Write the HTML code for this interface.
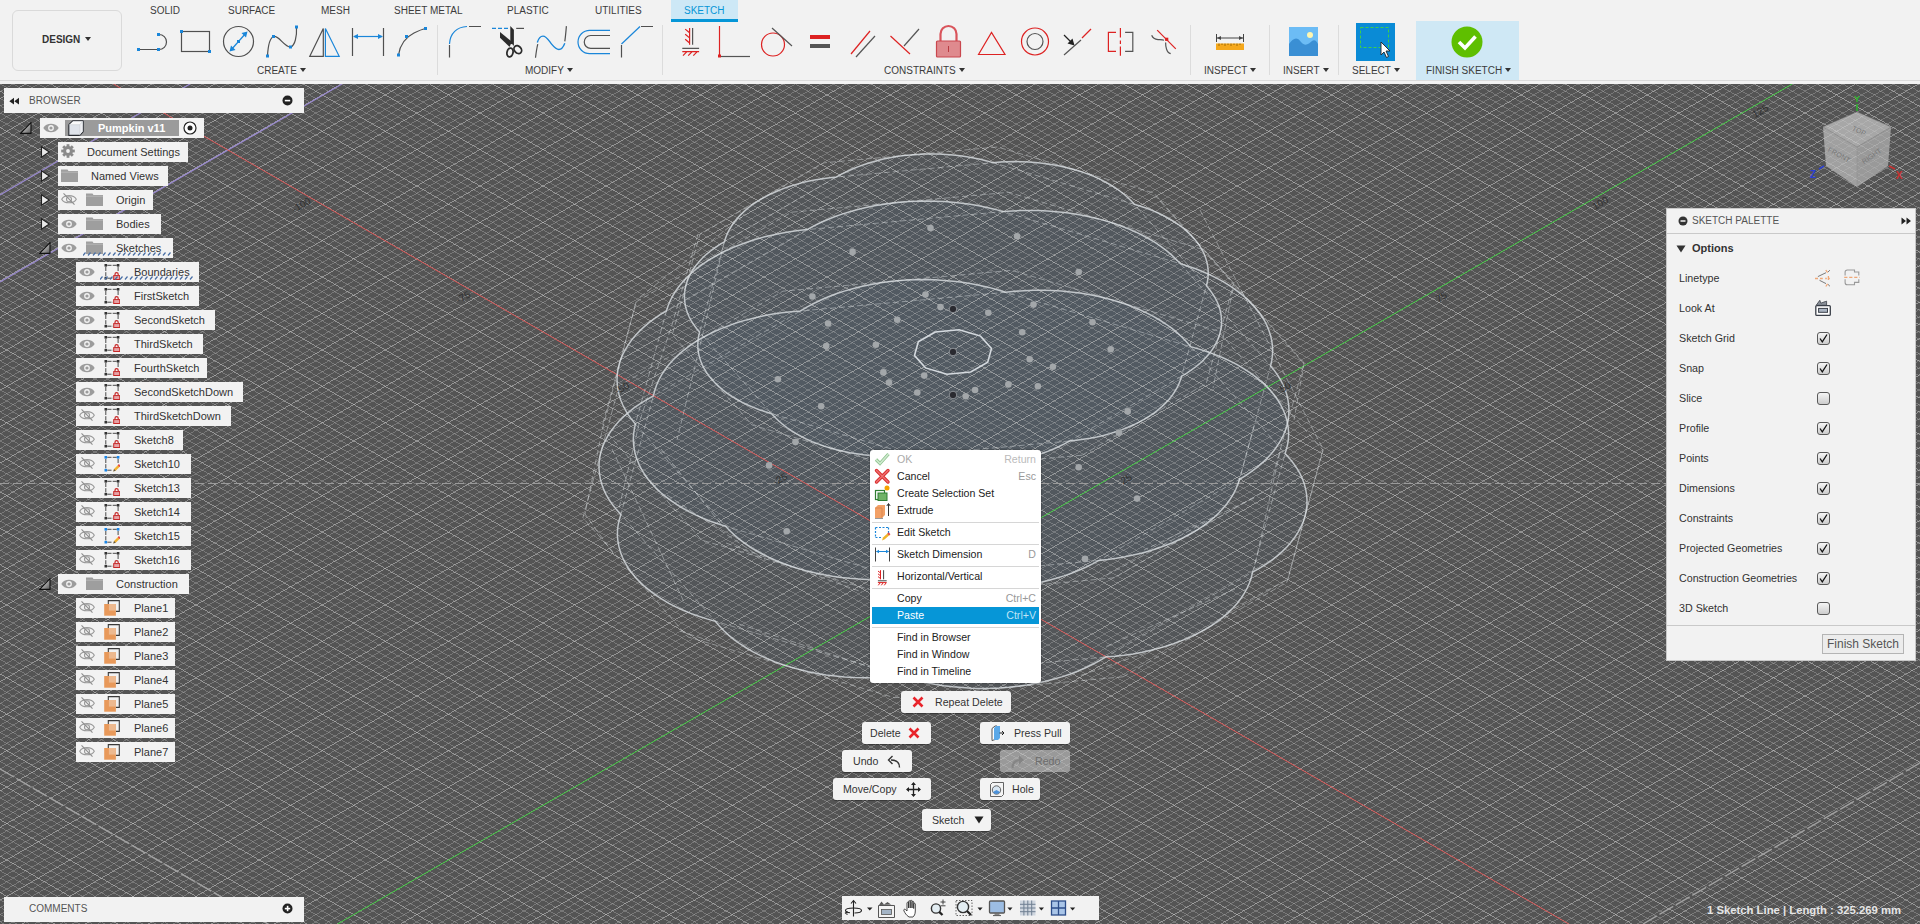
<!DOCTYPE html>
<html><head><meta charset="utf-8">
<style>
*{box-sizing:border-box}
html,body{margin:0;padding:0}
body{width:1920px;height:924px;overflow:hidden;position:relative;background:#545454;font-family:"Liberation Sans",sans-serif;color:#333}
.a{position:absolute}
.t{position:absolute;white-space:nowrap;line-height:1}
#vp{position:absolute;left:0;top:0}
#tb{left:0;top:0;width:1920px;height:84px;background:#f2f2f2}
#tb .tab{font-size:10px;color:#3c3c3c;top:6px}
#tb .grp{font-size:10px;color:#3c3c3c;top:66px}
.dd{display:inline-block;width:0;height:0;border-left:3px solid transparent;border-right:3px solid transparent;border-top:4px solid #333;vertical-align:middle;margin-left:3px;position:relative;top:-1px}
.sep{position:absolute;top:25px;width:1px;height:50px;background:#dcdcdc}
.row{position:absolute;height:20px;background:#f2f2f2}
.row .lbl{position:absolute;top:4px;font-size:11px;color:#333;white-space:nowrap;line-height:1.1}
.pal .lbl{position:absolute;left:12px;font-size:10.7px;color:#333;white-space:nowrap;line-height:1}
.cb{position:absolute;left:150px;width:13px;height:13px;border:1px solid #5a5a5a;border-radius:3px;background:linear-gradient(#f6f6f6,#cccccc)}
.mi{position:absolute;left:0;width:171px;height:17px;font-size:10.6px;color:#222;line-height:17px}
.mi span.l{position:absolute;left:27px}
.mi span.r{position:absolute;right:5px;color:#999}
.msep{position:absolute;left:2px;width:167px;height:1px;background:#d6d6d6}
.btn{position:absolute;height:22px;background:#f3f3f3;border-radius:3px;box-shadow:0 1px 1px rgba(0,0,0,.35);font-size:10.6px;color:#333;line-height:22px;white-space:nowrap}
</style></head><body>
<svg id="vp" width="1920" height="924" viewBox="0 0 1920 924">
<rect x="0" y="84" width="1920" height="840" fill="#545454"/>
<path d="M1252.6 572.1 L1251.3 577.5 L1249.5 582.8 L1247.2 588.0 L1244.4 593.2 L1241.1 598.2 L1237.3 603.2 L1233.0 608.0 L1228.3 612.6 L1223.1 617.1 L1217.4 621.4 L1211.4 625.6 L1205.0 629.5 L1198.2 633.2 L1191.0 636.7 L1183.6 639.9 L1175.8 642.9 L1167.7 645.7 L1159.4 648.1 L1150.8 650.3 L1142.1 652.2 L1133.2 653.9 L1124.1 655.2 L1114.9 656.2 L1105.6 657.0 L1099.2 660.9 L1092.3 664.5 L1085.1 668.0 L1077.6 671.2 L1069.8 674.2 L1061.7 676.9 L1053.3 679.3 L1044.7 681.5 L1036.0 683.3 L1027.0 684.9 L1017.9 686.2 L1008.7 687.2 L999.5 687.9 L990.1 688.3 L980.8 688.4 L971.4 688.2 L962.1 687.6 L952.9 686.8 L943.7 685.7 L934.7 684.3 L925.8 682.6 L917.1 680.6 L908.7 678.3 L900.4 675.7 L891.2 676.7 L881.9 677.3 L872.6 677.7 L863.2 677.7 L853.9 677.5 L844.6 676.9 L835.3 676.0 L826.2 674.9 L817.2 673.4 L808.3 671.7 L799.7 669.6 L791.2 667.3 L783.0 664.7 L775.1 661.9 L767.4 658.8 L760.1 655.4 L753.1 651.8 L746.4 648.0 L740.2 644.0 L734.3 639.8 L728.9 635.4 L723.9 630.8 L719.3 626.1 L715.3 621.3 L706.8 618.9 L698.7 616.3 L690.7 613.4 L683.1 610.3 L675.8 606.9 L668.9 603.3 L662.3 599.4 L656.1 595.4 L650.3 591.2 L644.9 586.7 L640.0 582.1 L635.5 577.4 L631.5 572.5 L627.9 567.5 L624.9 562.4 L622.4 557.2 L620.4 551.9 L618.9 546.6 L617.9 541.2 L617.4 535.8 L617.5 530.4 L618.1 525.0 L619.3 519.7 L620.9 514.4 L616.5 509.6 L612.6 504.7 L609.1 499.7 L606.1 494.6 L603.7 489.4 L601.7 484.1 L600.3 478.7 L599.4 473.4 L599.0 468.0 L599.1 462.6 L599.8 457.2 L601.0 451.8 L602.7 446.5 L605.0 441.3 L607.7 436.1 L611.0 431.0 L614.7 426.1 L618.9 421.3 L623.6 416.6 L628.8 412.1 L634.3 407.7 L640.3 403.6 L646.7 399.6 L653.4 395.9 L654.7 390.5 L656.5 385.2 L658.8 380.0 L661.6 374.8 L664.9 369.8 L668.7 364.8 L673.0 360.0 L677.7 355.4 L682.9 350.9 L688.6 346.6 L694.6 342.4 L701.0 338.5 L707.8 334.8 L715.0 331.3 L722.4 328.1 L730.2 325.1 L738.3 322.3 L746.6 319.9 L755.2 317.7 L763.9 315.8 L772.8 314.1 L781.9 312.8 L791.1 311.8 L800.4 311.0 L806.8 307.1 L813.7 303.5 L820.9 300.0 L828.4 296.8 L836.2 293.8 L844.3 291.1 L852.7 288.7 L861.3 286.5 L870.0 284.7 L879.0 283.1 L888.1 281.8 L897.3 280.8 L906.5 280.1 L915.9 279.7 L925.2 279.6 L934.6 279.8 L943.9 280.4 L953.1 281.2 L962.3 282.3 L971.3 283.7 L980.2 285.4 L988.9 287.4 L997.3 289.7 L1005.6 292.3 L1014.8 291.3 L1024.1 290.7 L1033.4 290.3 L1042.8 290.3 L1052.1 290.5 L1061.4 291.1 L1070.7 292.0 L1079.8 293.1 L1088.8 294.6 L1097.7 296.3 L1106.3 298.4 L1114.8 300.7 L1123.0 303.3 L1130.9 306.1 L1138.6 309.2 L1145.9 312.6 L1152.9 316.2 L1159.6 320.0 L1165.8 324.0 L1171.7 328.2 L1177.1 332.6 L1182.1 337.2 L1186.7 341.9 L1190.7 346.7 L1199.2 349.1 L1207.3 351.7 L1215.3 354.6 L1222.9 357.7 L1230.2 361.1 L1237.1 364.7 L1243.7 368.6 L1249.9 372.6 L1255.7 376.8 L1261.1 381.3 L1266.0 385.9 L1270.5 390.6 L1274.5 395.5 L1278.1 400.5 L1281.1 405.6 L1283.6 410.8 L1285.6 416.1 L1287.1 421.4 L1288.1 426.8 L1288.6 432.2 L1288.5 437.6 L1287.9 443.0 L1286.7 448.3 L1285.1 453.6 L1289.5 458.4 L1293.4 463.3 L1296.9 468.3 L1299.9 473.4 L1302.3 478.6 L1304.3 483.9 L1305.7 489.3 L1306.6 494.6 L1307.0 500.0 L1306.9 505.4 L1306.2 510.8 L1305.0 516.2 L1303.3 521.5 L1301.0 526.7 L1298.3 531.9 L1295.0 537.0 L1291.3 541.9 L1287.1 546.7 L1282.4 551.4 L1277.2 555.9 L1271.7 560.3 L1265.7 564.4 L1259.3 568.4Z" fill="rgba(85,110,135,0.12)" stroke="none"/>
<path d="M1239.5 479.3 L1237.9 484.3 L1235.8 489.3 L1233.3 494.2 L1230.3 499.0 L1226.9 503.7 L1223.1 508.3 L1218.9 512.8 L1214.3 517.2 L1209.3 521.4 L1203.9 525.4 L1198.1 529.3 L1192.0 533.0 L1185.6 536.5 L1178.9 539.8 L1171.9 543.0 L1164.6 545.8 L1157.0 548.5 L1149.3 551.0 L1141.3 553.2 L1133.1 555.1 L1124.8 556.8 L1116.3 558.3 L1107.7 559.5 L1099.0 560.4 L1092.6 563.9 L1085.8 567.2 L1078.8 570.3 L1071.5 573.2 L1064.0 575.9 L1056.2 578.3 L1048.2 580.5 L1040.0 582.5 L1031.7 584.2 L1023.2 585.6 L1014.6 586.8 L1005.9 587.8 L997.1 588.4 L988.3 588.8 L979.4 589.0 L970.6 588.8 L961.8 588.4 L953.0 587.8 L944.3 586.8 L935.7 585.7 L927.2 584.2 L918.9 582.5 L910.7 580.6 L902.7 578.4 L893.9 579.0 L885.1 579.4 L876.3 579.6 L867.4 579.4 L858.6 579.0 L849.8 578.3 L841.1 577.4 L832.5 576.2 L824.0 574.8 L815.7 573.1 L807.5 571.1 L799.5 568.9 L791.8 566.5 L784.2 563.8 L776.9 560.9 L769.9 557.8 L763.2 554.5 L756.7 551.0 L750.6 547.3 L744.9 543.4 L739.5 539.3 L734.5 535.1 L729.9 530.8 L725.6 526.3 L717.9 523.8 L710.3 521.2 L703.0 518.3 L696.0 515.1 L689.3 511.8 L682.9 508.3 L676.8 504.6 L671.0 500.7 L665.7 496.7 L660.6 492.5 L656.0 488.1 L651.8 483.6 L648.0 479.0 L644.6 474.3 L641.6 469.5 L639.1 464.6 L637.1 459.6 L635.4 454.6 L634.3 449.5 L633.6 444.4 L633.3 439.3 L633.6 434.2 L634.3 429.1 L635.4 424.0 L631.6 419.4 L628.2 414.7 L625.3 409.9 L622.8 405.0 L620.7 400.0 L619.1 395.0 L618.0 389.9 L617.3 384.8 L617.0 379.7 L617.3 374.6 L618.0 369.5 L619.1 364.5 L620.7 359.4 L622.8 354.5 L625.3 349.6 L628.3 344.8 L631.6 340.0 L635.4 335.4 L639.7 330.9 L644.3 326.6 L649.3 322.4 L654.7 318.3 L660.4 314.4 L666.5 310.7 L668.1 305.7 L670.2 300.7 L672.7 295.8 L675.7 291.0 L679.1 286.3 L682.9 281.7 L687.1 277.2 L691.7 272.8 L696.7 268.6 L702.1 264.6 L707.9 260.7 L714.0 257.0 L720.4 253.5 L727.1 250.2 L734.1 247.0 L741.4 244.2 L749.0 241.5 L756.7 239.0 L764.7 236.8 L772.9 234.9 L781.2 233.2 L789.7 231.7 L798.3 230.5 L807.0 229.6 L813.4 226.1 L820.2 222.8 L827.2 219.7 L834.5 216.8 L842.0 214.1 L849.8 211.7 L857.8 209.5 L866.0 207.5 L874.3 205.8 L882.8 204.4 L891.4 203.2 L900.1 202.2 L908.9 201.6 L917.7 201.2 L926.6 201.0 L935.4 201.2 L944.2 201.6 L953.0 202.2 L961.7 203.2 L970.3 204.3 L978.8 205.8 L987.1 207.5 L995.3 209.4 L1003.3 211.6 L1012.1 211.0 L1020.9 210.6 L1029.7 210.4 L1038.6 210.6 L1047.4 211.0 L1056.2 211.7 L1064.9 212.6 L1073.5 213.8 L1082.0 215.2 L1090.3 216.9 L1098.5 218.9 L1106.5 221.1 L1114.2 223.5 L1121.8 226.2 L1129.1 229.1 L1136.1 232.2 L1142.8 235.5 L1149.3 239.0 L1155.4 242.7 L1161.1 246.6 L1166.5 250.7 L1171.5 254.9 L1176.1 259.2 L1180.4 263.7 L1188.1 266.2 L1195.7 268.8 L1203.0 271.7 L1210.0 274.9 L1216.7 278.2 L1223.1 281.7 L1229.2 285.4 L1235.0 289.3 L1240.3 293.3 L1245.4 297.5 L1250.0 301.9 L1254.2 306.4 L1258.0 311.0 L1261.4 315.7 L1264.4 320.5 L1266.9 325.4 L1268.9 330.4 L1270.6 335.4 L1271.7 340.5 L1272.4 345.6 L1272.7 350.7 L1272.4 355.8 L1271.7 360.9 L1270.6 366.0 L1274.4 370.6 L1277.8 375.3 L1280.7 380.1 L1283.2 385.0 L1285.3 390.0 L1286.9 395.0 L1288.0 400.1 L1288.7 405.2 L1289.0 410.3 L1288.7 415.4 L1288.0 420.5 L1286.9 425.5 L1285.3 430.6 L1283.2 435.5 L1280.7 440.4 L1277.7 445.2 L1274.4 450.0 L1270.6 454.6 L1266.3 459.1 L1261.7 463.4 L1256.7 467.6 L1251.3 471.7 L1245.6 475.6Z" fill="rgba(85,110,135,0.12)" stroke="none"/>
<path d="M1181.6 376.2 L1180.3 380.3 L1178.8 384.2 L1176.8 388.2 L1174.5 392.0 L1171.9 395.8 L1168.9 399.5 L1165.5 403.1 L1161.8 406.6 L1157.9 410.0 L1153.6 413.3 L1149.0 416.4 L1144.1 419.3 L1139.0 422.1 L1133.6 424.8 L1127.9 427.3 L1122.1 429.6 L1116.0 431.7 L1109.8 433.6 L1103.4 435.4 L1096.8 436.9 L1090.1 438.2 L1083.3 439.3 L1076.4 440.3 L1069.5 441.0 L1064.4 443.8 L1059.0 446.5 L1053.5 449.0 L1047.7 451.4 L1041.7 453.5 L1035.5 455.5 L1029.1 457.3 L1022.6 458.9 L1015.9 460.2 L1009.1 461.4 L1002.2 462.4 L995.3 463.1 L988.3 463.6 L981.2 464.0 L974.1 464.1 L967.0 463.9 L960.0 463.6 L953.0 463.0 L946.0 462.3 L939.2 461.3 L932.4 460.1 L925.7 458.7 L919.2 457.1 L912.9 455.3 L905.9 455.9 L898.8 456.2 L891.7 456.4 L884.7 456.3 L877.6 456.0 L870.6 455.5 L863.6 454.8 L856.7 453.8 L849.9 452.7 L843.2 451.3 L836.7 449.8 L830.3 448.0 L824.1 446.1 L818.1 443.9 L812.2 441.6 L806.6 439.1 L801.3 436.4 L796.2 433.6 L791.3 430.6 L786.8 427.5 L782.5 424.2 L778.6 420.8 L774.9 417.3 L771.6 413.7 L765.4 411.8 L759.3 409.7 L753.4 407.4 L747.8 405.0 L742.3 402.3 L737.2 399.5 L732.3 396.6 L727.6 393.5 L723.3 390.3 L719.3 386.9 L715.6 383.4 L712.2 379.8 L709.2 376.1 L706.5 372.4 L704.1 368.5 L702.1 364.6 L700.5 360.6 L699.3 356.6 L698.4 352.5 L697.9 348.5 L697.8 344.4 L698.0 340.3 L698.6 336.2 L699.6 332.2 L696.5 328.5 L693.7 324.7 L691.3 320.9 L689.2 317.0 L687.5 313.0 L686.2 309.0 L685.2 305.0 L684.7 300.9 L684.4 296.8 L684.6 292.7 L685.2 288.6 L686.1 284.6 L687.4 280.6 L689.0 276.6 L691.1 272.7 L693.4 268.8 L696.2 265.1 L699.3 261.4 L702.7 257.8 L706.4 254.3 L710.5 251.0 L714.9 247.8 L719.5 244.7 L724.4 241.8 L725.7 237.7 L727.2 233.8 L729.2 229.8 L731.5 226.0 L734.1 222.2 L737.1 218.5 L740.5 214.9 L744.2 211.4 L748.1 208.0 L752.4 204.7 L757.0 201.6 L761.9 198.7 L767.0 195.9 L772.4 193.2 L778.1 190.7 L783.9 188.4 L790.0 186.3 L796.2 184.4 L802.6 182.6 L809.2 181.1 L815.9 179.8 L822.7 178.7 L829.6 177.7 L836.5 177.0 L841.6 174.2 L847.0 171.5 L852.5 169.0 L858.3 166.6 L864.3 164.5 L870.5 162.5 L876.9 160.7 L883.4 159.1 L890.1 157.8 L896.9 156.6 L903.8 155.6 L910.7 154.9 L917.7 154.4 L924.8 154.0 L931.9 153.9 L939.0 154.1 L946.0 154.4 L953.0 155.0 L960.0 155.7 L966.8 156.7 L973.6 157.9 L980.3 159.3 L986.8 160.9 L993.1 162.7 L1000.1 162.1 L1007.2 161.8 L1014.3 161.6 L1021.3 161.7 L1028.4 162.0 L1035.4 162.5 L1042.4 163.2 L1049.3 164.2 L1056.1 165.3 L1062.8 166.7 L1069.3 168.2 L1075.7 170.0 L1081.9 171.9 L1087.9 174.1 L1093.8 176.4 L1099.4 178.9 L1104.7 181.6 L1109.8 184.4 L1114.7 187.4 L1119.2 190.5 L1123.5 193.8 L1127.4 197.2 L1131.1 200.7 L1134.4 204.3 L1140.6 206.2 L1146.7 208.3 L1152.6 210.6 L1158.2 213.0 L1163.7 215.7 L1168.8 218.5 L1173.7 221.4 L1178.4 224.5 L1182.7 227.7 L1186.7 231.1 L1190.4 234.6 L1193.8 238.2 L1196.8 241.9 L1199.5 245.6 L1201.9 249.5 L1203.9 253.4 L1205.5 257.4 L1206.7 261.4 L1207.6 265.5 L1208.1 269.5 L1208.2 273.6 L1208.0 277.7 L1207.4 281.8 L1206.4 285.8 L1209.5 289.5 L1212.3 293.3 L1214.7 297.1 L1216.8 301.0 L1218.5 305.0 L1219.8 309.0 L1220.8 313.0 L1221.3 317.1 L1221.6 321.2 L1221.4 325.3 L1220.8 329.4 L1219.9 333.4 L1218.6 337.4 L1217.0 341.4 L1214.9 345.3 L1212.6 349.2 L1209.8 352.9 L1206.7 356.6 L1203.3 360.2 L1199.6 363.7 L1195.5 367.0 L1191.1 370.2 L1186.5 373.3Z" fill="rgba(85,110,135,0.12)" stroke="none"/>
<path d="M0 -1023.73 L1920 84.78 M0 -1016.44 L1920 92.07 M0 -1009.16 L1920 99.36 M0 -994.58 L1920 113.93 M0 -987.30 L1920 121.21 M0 -980.01 L1920 128.50 M0 -972.73 L1920 135.79 M0 -958.15 L1920 150.36 M0 -950.87 L1920 157.64 M0 -943.58 L1920 164.93 M0 -936.30 L1920 172.22 M0 -921.72 L1920 186.79 M0 -914.44 L1920 194.07 M0 -907.15 L1920 201.36 M0 -899.87 L1920 208.65 M0 -885.29 L1920 223.22 M0 -878.01 L1920 230.50 M0 -870.72 L1920 237.79 M0 -863.44 L1920 245.08 M0 -848.86 L1920 259.65 M0 -841.58 L1920 266.93 M0 -834.29 L1920 274.22 M0 -827.01 L1920 281.51 M0 -812.43 L1920 296.08 M0 -805.15 L1920 303.36 M0 -797.86 L1920 310.65 M0 -790.58 L1920 317.94 M0 -776.00 L1920 332.51 M0 -768.72 L1920 339.79 M0 -761.43 L1920 347.08 M0 -754.15 L1920 354.37 M0 -739.57 L1920 368.94 M0 -732.29 L1920 376.22 M0 -725.00 L1920 383.51 M0 -717.72 L1920 390.80 M0 -703.14 L1920 405.37 M0 -695.86 L1920 412.65 M0 -688.57 L1920 419.94 M0 -681.29 L1920 427.23 M0 -666.71 L1920 441.80 M0 -659.43 L1920 449.08 M0 -652.14 L1920 456.37 M0 -644.86 L1920 463.66 M0 -630.28 L1920 478.23 M0 -623.00 L1920 485.51 M0 -615.71 L1920 492.80 M0 -608.43 L1920 500.09 M0 -593.85 L1920 514.66 M0 -586.57 L1920 521.94 M0 -579.28 L1920 529.23 M0 -572.00 L1920 536.52 M0 -557.42 L1920 551.09 M0 -550.14 L1920 558.37 M0 -542.85 L1920 565.66 M0 -535.57 L1920 572.95 M0 -520.99 L1920 587.52 M0 -513.71 L1920 594.80 M0 -506.42 L1920 602.09 M0 -499.14 L1920 609.38 M0 -484.56 L1920 623.95 M0 -477.28 L1920 631.23 M0 -469.99 L1920 638.52 M0 -462.71 L1920 645.81 M0 -448.13 L1920 660.38 M0 -440.85 L1920 667.66 M0 -433.56 L1920 674.95 M0 -426.28 L1920 682.24 M0 -411.70 L1920 696.81 M0 -404.42 L1920 704.09 M0 -397.13 L1920 711.38 M0 -389.85 L1920 718.67 M0 -375.27 L1920 733.24 M0 -367.99 L1920 740.52 M0 -360.70 L1920 747.81 M0 -353.42 L1920 755.10 M0 -338.84 L1920 769.67 M0 -331.56 L1920 776.95 M0 -324.27 L1920 784.24 M0 -316.99 L1920 791.53 M0 -302.41 L1920 806.10 M0 -295.13 L1920 813.38 M0 -287.84 L1920 820.67 M0 -280.56 L1920 827.96 M0 -265.98 L1920 842.53 M0 -258.70 L1920 849.81 M0 -251.41 L1920 857.10 M0 -244.13 L1920 864.39 M0 -229.55 L1920 878.96 M0 -222.27 L1920 886.24 M0 -214.98 L1920 893.53 M0 -207.70 L1920 900.82 M0 -193.12 L1920 915.39 M0 -185.84 L1920 922.67 M0 -178.55 L1920 929.96 M0 -171.27 L1920 937.25 M0 -156.69 L1920 951.82 M0 -149.41 L1920 959.10 M0 -142.12 L1920 966.39 M0 -134.84 L1920 973.68 M0 -120.26 L1920 988.25 M0 -112.98 L1920 995.53 M0 -105.69 L1920 1002.82 M0 -98.41 L1920 1010.11 M0 -83.83 L1920 1024.68 M0 -76.55 L1920 1031.96 M0 -69.26 L1920 1039.25 M0 -61.98 L1920 1046.54 M0 -47.40 L1920 1061.11 M0 -40.12 L1920 1068.39 M0 -32.83 L1920 1075.68 M0 -25.55 L1920 1082.97 M0 -10.97 L1920 1097.54 M0 -3.69 L1920 1104.82 M0 3.60 L1920 1112.11 M0 10.88 L1920 1119.40 M0 25.46 L1920 1133.97 M0 32.74 L1920 1141.25 M0 40.03 L1920 1148.54 M0 47.31 L1920 1155.83 M0 61.89 L1920 1170.40 M0 69.17 L1920 1177.68 M0 76.46 L1920 1184.97 M0 83.74 L1920 1192.26 M0 98.32 L1920 1206.83 M0 105.60 L1920 1214.11 M0 112.89 L1920 1221.40 M0 120.17 L1920 1228.69 M0 134.75 L1920 1243.26 M0 142.03 L1920 1250.54 M0 149.32 L1920 1257.83 M0 156.60 L1920 1265.12 M0 171.18 L1920 1279.69 M0 178.46 L1920 1286.97 M0 185.75 L1920 1294.26 M0 193.03 L1920 1301.55 M0 207.61 L1920 1316.12 M0 214.89 L1920 1323.40 M0 222.18 L1920 1330.69 M0 229.46 L1920 1337.98 M0 244.04 L1920 1352.55 M0 251.32 L1920 1359.83 M0 258.61 L1920 1367.12 M0 265.89 L1920 1374.41 M0 280.47 L1920 1388.98 M0 287.75 L1920 1396.26 M0 295.04 L1920 1403.55 M0 302.32 L1920 1410.84 M0 316.90 L1920 1425.41 M0 324.18 L1920 1432.69 M0 331.47 L1920 1439.98 M0 338.75 L1920 1447.27 M0 353.33 L1920 1461.84 M0 360.61 L1920 1469.12 M0 367.90 L1920 1476.41 M0 375.18 L1920 1483.70 M0 389.76 L1920 1498.27 M0 397.04 L1920 1505.55 M0 404.33 L1920 1512.84 M0 411.61 L1920 1520.13 M0 426.19 L1920 1534.70 M0 433.47 L1920 1541.98 M0 440.76 L1920 1549.27 M0 448.04 L1920 1556.56 M0 462.62 L1920 1571.13 M0 469.90 L1920 1578.41 M0 477.19 L1920 1585.70 M0 484.47 L1920 1592.99 M0 499.05 L1920 1607.56 M0 506.33 L1920 1614.84 M0 513.62 L1920 1622.13 M0 520.90 L1920 1629.42 M0 535.48 L1920 1643.99 M0 542.76 L1920 1651.27 M0 550.05 L1920 1658.56 M0 557.33 L1920 1665.85 M0 571.91 L1920 1680.42 M0 579.19 L1920 1687.70 M0 586.48 L1920 1694.99 M0 593.76 L1920 1702.28 M0 608.34 L1920 1716.85 M0 615.62 L1920 1724.13 M0 622.91 L1920 1731.42 M0 630.19 L1920 1738.71 M0 644.77 L1920 1753.28 M0 652.05 L1920 1760.56 M0 659.34 L1920 1767.85 M0 666.62 L1920 1775.14 M0 681.20 L1920 1789.71 M0 688.48 L1920 1796.99 M0 695.77 L1920 1804.28 M0 703.05 L1920 1811.57 M0 717.63 L1920 1826.14 M0 724.91 L1920 1833.42 M0 732.20 L1920 1840.71 M0 739.48 L1920 1848.00 M0 754.06 L1920 1862.57 M0 761.34 L1920 1869.85 M0 768.63 L1920 1877.14 M0 775.91 L1920 1884.43 M0 790.49 L1920 1899.00 M0 797.77 L1920 1906.28 M0 805.06 L1920 1913.57 M0 812.34 L1920 1920.86 M0 826.92 L1920 1935.43 M0 834.20 L1920 1942.71 M0 841.49 L1920 1950.00 M0 848.77 L1920 1957.29 M0 863.35 L1920 1971.86 M0 870.63 L1920 1979.14 M0 877.92 L1920 1986.43 M0 885.20 L1920 1993.72 M0 899.78 L1920 2008.29 M0 907.06 L1920 2015.57 M0 914.35 L1920 2022.86 M0 921.63 L1920 2030.15 M0 84.22 L1920 -1024.29 M0 91.50 L1920 -1017.01 M0 106.08 L1920 -1002.44 M0 113.36 L1920 -995.15 M0 120.65 L1920 -987.86 M0 127.93 L1920 -980.58 M0 142.51 L1920 -966.01 M0 149.79 L1920 -958.72 M0 157.08 L1920 -951.43 M0 164.36 L1920 -944.15 M0 178.94 L1920 -929.58 M0 186.22 L1920 -922.29 M0 193.51 L1920 -915.00 M0 200.79 L1920 -907.72 M0 215.37 L1920 -893.15 M0 222.65 L1920 -885.86 M0 229.94 L1920 -878.57 M0 237.22 L1920 -871.29 M0 251.80 L1920 -856.72 M0 259.08 L1920 -849.43 M0 266.37 L1920 -842.14 M0 273.65 L1920 -834.86 M0 288.23 L1920 -820.29 M0 295.51 L1920 -813.00 M0 302.80 L1920 -805.71 M0 310.08 L1920 -798.43 M0 324.66 L1920 -783.86 M0 331.94 L1920 -776.57 M0 339.23 L1920 -769.28 M0 346.51 L1920 -762.00 M0 361.09 L1920 -747.43 M0 368.37 L1920 -740.14 M0 375.66 L1920 -732.85 M0 382.94 L1920 -725.57 M0 397.52 L1920 -711.00 M0 404.80 L1920 -703.71 M0 412.09 L1920 -696.42 M0 419.37 L1920 -689.14 M0 433.95 L1920 -674.57 M0 441.23 L1920 -667.28 M0 448.52 L1920 -659.99 M0 455.80 L1920 -652.71 M0 470.38 L1920 -638.14 M0 477.66 L1920 -630.85 M0 484.95 L1920 -623.56 M0 492.23 L1920 -616.28 M0 506.81 L1920 -601.71 M0 514.09 L1920 -594.42 M0 521.38 L1920 -587.13 M0 528.66 L1920 -579.85 M0 543.24 L1920 -565.28 M0 550.52 L1920 -557.99 M0 557.81 L1920 -550.70 M0 565.09 L1920 -543.42 M0 579.67 L1920 -528.85 M0 586.95 L1920 -521.56 M0 594.24 L1920 -514.27 M0 601.52 L1920 -506.99 M0 616.10 L1920 -492.42 M0 623.38 L1920 -485.13 M0 630.67 L1920 -477.84 M0 637.95 L1920 -470.56 M0 652.53 L1920 -455.99 M0 659.81 L1920 -448.70 M0 667.10 L1920 -441.41 M0 674.38 L1920 -434.13 M0 688.96 L1920 -419.56 M0 696.24 L1920 -412.27 M0 703.53 L1920 -404.98 M0 710.81 L1920 -397.70 M0 725.39 L1920 -383.13 M0 732.67 L1920 -375.84 M0 739.96 L1920 -368.55 M0 747.24 L1920 -361.27 M0 761.82 L1920 -346.70 M0 769.10 L1920 -339.41 M0 776.39 L1920 -332.12 M0 783.67 L1920 -324.84 M0 798.25 L1920 -310.27 M0 805.53 L1920 -302.98 M0 812.82 L1920 -295.69 M0 820.10 L1920 -288.41 M0 834.68 L1920 -273.84 M0 841.96 L1920 -266.55 M0 849.25 L1920 -259.26 M0 856.53 L1920 -251.98 M0 871.11 L1920 -237.41 M0 878.39 L1920 -230.12 M0 885.68 L1920 -222.83 M0 892.96 L1920 -215.55 M0 907.54 L1920 -200.98 M0 914.82 L1920 -193.69 M0 922.11 L1920 -186.40 M0 929.39 L1920 -179.12 M0 943.97 L1920 -164.55 M0 951.25 L1920 -157.26 M0 958.54 L1920 -149.97 M0 965.82 L1920 -142.69 M0 980.40 L1920 -128.12 M0 987.68 L1920 -120.83 M0 994.97 L1920 -113.54 M0 1002.25 L1920 -106.26 M0 1016.83 L1920 -91.69 M0 1024.11 L1920 -84.40 M0 1031.40 L1920 -77.11 M0 1038.68 L1920 -69.83 M0 1053.26 L1920 -55.26 M0 1060.54 L1920 -47.97 M0 1067.83 L1920 -40.68 M0 1075.11 L1920 -33.40 M0 1089.69 L1920 -18.83 M0 1096.97 L1920 -11.54 M0 1104.26 L1920 -4.25 M0 1111.54 L1920 3.03 M0 1126.12 L1920 17.60 M0 1133.40 L1920 24.89 M0 1140.69 L1920 32.18 M0 1147.97 L1920 39.46 M0 1162.55 L1920 54.03 M0 1169.83 L1920 61.32 M0 1177.12 L1920 68.61 M0 1184.40 L1920 75.89 M0 1198.98 L1920 90.46 M0 1206.26 L1920 97.75 M0 1213.55 L1920 105.04 M0 1220.83 L1920 112.32 M0 1235.41 L1920 126.89 M0 1242.69 L1920 134.18 M0 1249.98 L1920 141.47 M0 1257.26 L1920 148.75 M0 1271.84 L1920 163.32 M0 1279.12 L1920 170.61 M0 1286.41 L1920 177.90 M0 1293.69 L1920 185.18 M0 1308.27 L1920 199.75 M0 1315.55 L1920 207.04 M0 1322.84 L1920 214.33 M0 1330.12 L1920 221.61 M0 1344.70 L1920 236.18 M0 1351.98 L1920 243.47 M0 1359.27 L1920 250.76 M0 1366.55 L1920 258.04 M0 1381.13 L1920 272.61 M0 1388.41 L1920 279.90 M0 1395.70 L1920 287.19 M0 1402.98 L1920 294.47 M0 1417.56 L1920 309.04 M0 1424.84 L1920 316.33 M0 1432.13 L1920 323.62 M0 1439.41 L1920 330.90 M0 1453.99 L1920 345.47 M0 1461.27 L1920 352.76 M0 1468.56 L1920 360.05 M0 1475.84 L1920 367.33 M0 1490.42 L1920 381.90 M0 1497.70 L1920 389.19 M0 1504.99 L1920 396.48 M0 1512.27 L1920 403.76 M0 1526.85 L1920 418.33 M0 1534.13 L1920 425.62 M0 1541.42 L1920 432.91 M0 1548.70 L1920 440.19 M0 1563.28 L1920 454.76 M0 1570.56 L1920 462.05 M0 1577.85 L1920 469.34 M0 1585.13 L1920 476.62 M0 1599.71 L1920 491.19 M0 1606.99 L1920 498.48 M0 1614.28 L1920 505.77 M0 1621.56 L1920 513.05 M0 1636.14 L1920 527.62 M0 1643.42 L1920 534.91 M0 1650.71 L1920 542.20 M0 1657.99 L1920 549.48 M0 1672.57 L1920 564.05 M0 1679.85 L1920 571.34 M0 1687.14 L1920 578.63 M0 1694.42 L1920 585.91 M0 1709.00 L1920 600.48 M0 1716.28 L1920 607.77 M0 1723.57 L1920 615.06 M0 1730.85 L1920 622.34 M0 1745.43 L1920 636.91 M0 1752.71 L1920 644.20 M0 1760.00 L1920 651.49 M0 1767.28 L1920 658.77 M0 1781.86 L1920 673.34 M0 1789.14 L1920 680.63 M0 1796.43 L1920 687.92 M0 1803.71 L1920 695.20 M0 1818.29 L1920 709.77 M0 1825.57 L1920 717.06 M0 1832.86 L1920 724.35 M0 1840.14 L1920 731.63 M0 1854.72 L1920 746.20 M0 1862.00 L1920 753.49 M0 1869.29 L1920 760.78 M0 1876.57 L1920 768.06 M0 1891.15 L1920 782.63 M0 1898.43 L1920 789.92 M0 1905.72 L1920 797.21 M0 1913.00 L1920 804.49 M0 1927.58 L1920 819.06 M0 1934.86 L1920 826.35 M0 1942.15 L1920 833.64 M0 1949.43 L1920 840.92 M0 1964.01 L1920 855.49 M0 1971.29 L1920 862.78 M0 1978.58 L1920 870.07 M0 1985.86 L1920 877.35 M0 2000.44 L1920 891.92 M0 2007.72 L1920 899.21 M0 2015.01 L1920 906.50 M0 2022.29 L1920 913.78" stroke="#b8b8b8" stroke-opacity="0.41" stroke-width="0.87" fill="none" shape-rendering="crispEdges"/>
<path d="M0 -1001.87 L1920 106.64 M0 -965.44 L1920 143.07 M0 -929.01 L1920 179.50 M0 -892.58 L1920 215.93 M0 -856.15 L1920 252.36 M0 -819.72 L1920 288.79 M0 -783.29 L1920 325.22 M0 -746.86 L1920 361.65 M0 -710.43 L1920 398.08 M0 -674.00 L1920 434.51 M0 -637.57 L1920 470.94 M0 -601.14 L1920 507.37 M0 -564.71 L1920 543.80 M0 -528.28 L1920 580.23 M0 -491.85 L1920 616.66 M0 -455.42 L1920 653.09 M0 -418.99 L1920 689.52 M0 -382.56 L1920 725.95 M0 -346.13 L1920 762.38 M0 -309.70 L1920 798.81 M0 -273.27 L1920 835.24 M0 -236.84 L1920 871.67 M0 -200.41 L1920 908.10 M0 -163.98 L1920 944.53 M0 -127.55 L1920 980.96 M0 -91.12 L1920 1017.39 M0 -54.69 L1920 1053.82 M0 -18.26 L1920 1090.25 M0 18.17 L1920 1126.68 M0 54.60 L1920 1163.11 M0 91.03 L1920 1199.54 M0 127.46 L1920 1235.97 M0 163.89 L1920 1272.40 M0 200.32 L1920 1308.83 M0 236.75 L1920 1345.26 M0 273.18 L1920 1381.69 M0 309.61 L1920 1418.12 M0 346.04 L1920 1454.55 M0 382.47 L1920 1490.98 M0 418.90 L1920 1527.41 M0 455.33 L1920 1563.84 M0 491.76 L1920 1600.27 M0 528.19 L1920 1636.70 M0 564.62 L1920 1673.13 M0 601.05 L1920 1709.56 M0 637.48 L1920 1745.99 M0 673.91 L1920 1782.42 M0 710.34 L1920 1818.85 M0 746.77 L1920 1855.28 M0 783.20 L1920 1891.71 M0 819.63 L1920 1928.14 M0 856.06 L1920 1964.57 M0 892.49 L1920 2001.00 M0 98.79 L1920 -1009.72 M0 135.22 L1920 -973.29 M0 171.65 L1920 -936.86 M0 208.08 L1920 -900.43 M0 244.51 L1920 -864.00 M0 280.94 L1920 -827.57 M0 317.37 L1920 -791.14 M0 353.80 L1920 -754.71 M0 390.23 L1920 -718.28 M0 426.66 L1920 -681.85 M0 463.09 L1920 -645.42 M0 499.52 L1920 -608.99 M0 535.95 L1920 -572.56 M0 572.38 L1920 -536.13 M0 608.81 L1920 -499.70 M0 645.24 L1920 -463.27 M0 681.67 L1920 -426.84 M0 718.10 L1920 -390.41 M0 754.53 L1920 -353.98 M0 790.96 L1920 -317.55 M0 827.39 L1920 -281.12 M0 863.82 L1920 -244.69 M0 900.25 L1920 -208.26 M0 936.68 L1920 -171.83 M0 973.11 L1920 -135.40 M0 1009.54 L1920 -98.97 M0 1045.97 L1920 -62.54 M0 1082.40 L1920 -26.11 M0 1118.83 L1920 10.32 M0 1155.26 L1920 46.75 M0 1191.69 L1920 83.18 M0 1228.12 L1920 119.61 M0 1264.55 L1920 156.04 M0 1300.98 L1920 192.47 M0 1337.41 L1920 228.90 M0 1373.84 L1920 265.33 M0 1410.27 L1920 301.76 M0 1446.70 L1920 338.19 M0 1483.13 L1920 374.62 M0 1519.56 L1920 411.05 M0 1555.99 L1920 447.48 M0 1592.42 L1920 483.91 M0 1628.85 L1920 520.34 M0 1665.28 L1920 556.77 M0 1701.71 L1920 593.20 M0 1738.14 L1920 629.63 M0 1774.57 L1920 666.06 M0 1811.00 L1920 702.49 M0 1847.43 L1920 738.92 M0 1883.86 L1920 775.35 M0 1920.29 L1920 811.78 M0 1956.72 L1920 848.21 M0 1993.15 L1920 884.64 M0 2029.58 L1920 921.07" stroke="#c8c8c8" stroke-opacity="0.64" stroke-width="0.87" fill="none" shape-rendering="crispEdges"/>
<path d="M0 195L190 84M0 282L342 84" stroke="#9a8ad0" stroke-width="1.2" fill="none"/>
<path d="M0 483.5H1920" stroke="#9a9a9a" stroke-width="1" stroke-dasharray="9 4" fill="none"/>
<path d="M113.4 84L1568.9 924" stroke="#d05050" stroke-width="1" fill="none"/>
<path d="M1792.3 84L337.5 924" stroke="#3cc23c" stroke-width="1" fill="none"/>
<path d="M1252.6 572.1 L1251.3 577.5 L1249.5 582.8 L1247.2 588.0 L1244.4 593.2 L1241.1 598.2 L1237.3 603.2 L1233.0 608.0 L1228.3 612.6 L1223.1 617.1 L1217.4 621.4 L1211.4 625.6 L1205.0 629.5 L1198.2 633.2 L1191.0 636.7 L1183.6 639.9 L1175.8 642.9 L1167.7 645.7 L1159.4 648.1 L1150.8 650.3 L1142.1 652.2 L1133.2 653.9 L1124.1 655.2 L1114.9 656.2 L1105.6 657.0 L1099.2 660.9 L1092.3 664.5 L1085.1 668.0 L1077.6 671.2 L1069.8 674.2 L1061.7 676.9 L1053.3 679.3 L1044.7 681.5 L1036.0 683.3 L1027.0 684.9 L1017.9 686.2 L1008.7 687.2 L999.5 687.9 L990.1 688.3 L980.8 688.4 L971.4 688.2 L962.1 687.6 L952.9 686.8 L943.7 685.7 L934.7 684.3 L925.8 682.6 L917.1 680.6 L908.7 678.3 L900.4 675.7 L891.2 676.7 L881.9 677.3 L872.6 677.7 L863.2 677.7 L853.9 677.5 L844.6 676.9 L835.3 676.0 L826.2 674.9 L817.2 673.4 L808.3 671.7 L799.7 669.6 L791.2 667.3 L783.0 664.7 L775.1 661.9 L767.4 658.8 L760.1 655.4 L753.1 651.8 L746.4 648.0 L740.2 644.0 L734.3 639.8 L728.9 635.4 L723.9 630.8 L719.3 626.1 L715.3 621.3 L706.8 618.9 L698.7 616.3 L690.7 613.4 L683.1 610.3 L675.8 606.9 L668.9 603.3 L662.3 599.4 L656.1 595.4 L650.3 591.2 L644.9 586.7 L640.0 582.1 L635.5 577.4 L631.5 572.5 L627.9 567.5 L624.9 562.4 L622.4 557.2 L620.4 551.9 L618.9 546.6 L617.9 541.2 L617.4 535.8 L617.5 530.4 L618.1 525.0 L619.3 519.7 L620.9 514.4 L616.5 509.6 L612.6 504.7 L609.1 499.7 L606.1 494.6 L603.7 489.4 L601.7 484.1 L600.3 478.7 L599.4 473.4 L599.0 468.0 L599.1 462.6 L599.8 457.2 L601.0 451.8 L602.7 446.5 L605.0 441.3 L607.7 436.1 L611.0 431.0 L614.7 426.1 L618.9 421.3 L623.6 416.6 L628.8 412.1 L634.3 407.7 L640.3 403.6 L646.7 399.6 L653.4 395.9 L654.7 390.5 L656.5 385.2 L658.8 380.0 L661.6 374.8 L664.9 369.8 L668.7 364.8 L673.0 360.0 L677.7 355.4 L682.9 350.9 L688.6 346.6 L694.6 342.4 L701.0 338.5 L707.8 334.8 L715.0 331.3 L722.4 328.1 L730.2 325.1 L738.3 322.3 L746.6 319.9 L755.2 317.7 L763.9 315.8 L772.8 314.1 L781.9 312.8 L791.1 311.8 L800.4 311.0 L806.8 307.1 L813.7 303.5 L820.9 300.0 L828.4 296.8 L836.2 293.8 L844.3 291.1 L852.7 288.7 L861.3 286.5 L870.0 284.7 L879.0 283.1 L888.1 281.8 L897.3 280.8 L906.5 280.1 L915.9 279.7 L925.2 279.6 L934.6 279.8 L943.9 280.4 L953.1 281.2 L962.3 282.3 L971.3 283.7 L980.2 285.4 L988.9 287.4 L997.3 289.7 L1005.6 292.3 L1014.8 291.3 L1024.1 290.7 L1033.4 290.3 L1042.8 290.3 L1052.1 290.5 L1061.4 291.1 L1070.7 292.0 L1079.8 293.1 L1088.8 294.6 L1097.7 296.3 L1106.3 298.4 L1114.8 300.7 L1123.0 303.3 L1130.9 306.1 L1138.6 309.2 L1145.9 312.6 L1152.9 316.2 L1159.6 320.0 L1165.8 324.0 L1171.7 328.2 L1177.1 332.6 L1182.1 337.2 L1186.7 341.9 L1190.7 346.7 L1199.2 349.1 L1207.3 351.7 L1215.3 354.6 L1222.9 357.7 L1230.2 361.1 L1237.1 364.7 L1243.7 368.6 L1249.9 372.6 L1255.7 376.8 L1261.1 381.3 L1266.0 385.9 L1270.5 390.6 L1274.5 395.5 L1278.1 400.5 L1281.1 405.6 L1283.6 410.8 L1285.6 416.1 L1287.1 421.4 L1288.1 426.8 L1288.6 432.2 L1288.5 437.6 L1287.9 443.0 L1286.7 448.3 L1285.1 453.6 L1289.5 458.4 L1293.4 463.3 L1296.9 468.3 L1299.9 473.4 L1302.3 478.6 L1304.3 483.9 L1305.7 489.3 L1306.6 494.6 L1307.0 500.0 L1306.9 505.4 L1306.2 510.8 L1305.0 516.2 L1303.3 521.5 L1301.0 526.7 L1298.3 531.9 L1295.0 537.0 L1291.3 541.9 L1287.1 546.7 L1282.4 551.4 L1277.2 555.9 L1271.7 560.3 L1265.7 564.4 L1259.3 568.4Z" fill="none" stroke="#d4d8dc" stroke-width="1.5" stroke-opacity="0.85"/>
<path d="M1239.5 479.3 L1237.9 484.3 L1235.8 489.3 L1233.3 494.2 L1230.3 499.0 L1226.9 503.7 L1223.1 508.3 L1218.9 512.8 L1214.3 517.2 L1209.3 521.4 L1203.9 525.4 L1198.1 529.3 L1192.0 533.0 L1185.6 536.5 L1178.9 539.8 L1171.9 543.0 L1164.6 545.8 L1157.0 548.5 L1149.3 551.0 L1141.3 553.2 L1133.1 555.1 L1124.8 556.8 L1116.3 558.3 L1107.7 559.5 L1099.0 560.4 L1092.6 563.9 L1085.8 567.2 L1078.8 570.3 L1071.5 573.2 L1064.0 575.9 L1056.2 578.3 L1048.2 580.5 L1040.0 582.5 L1031.7 584.2 L1023.2 585.6 L1014.6 586.8 L1005.9 587.8 L997.1 588.4 L988.3 588.8 L979.4 589.0 L970.6 588.8 L961.8 588.4 L953.0 587.8 L944.3 586.8 L935.7 585.7 L927.2 584.2 L918.9 582.5 L910.7 580.6 L902.7 578.4 L893.9 579.0 L885.1 579.4 L876.3 579.6 L867.4 579.4 L858.6 579.0 L849.8 578.3 L841.1 577.4 L832.5 576.2 L824.0 574.8 L815.7 573.1 L807.5 571.1 L799.5 568.9 L791.8 566.5 L784.2 563.8 L776.9 560.9 L769.9 557.8 L763.2 554.5 L756.7 551.0 L750.6 547.3 L744.9 543.4 L739.5 539.3 L734.5 535.1 L729.9 530.8 L725.6 526.3 L717.9 523.8 L710.3 521.2 L703.0 518.3 L696.0 515.1 L689.3 511.8 L682.9 508.3 L676.8 504.6 L671.0 500.7 L665.7 496.7 L660.6 492.5 L656.0 488.1 L651.8 483.6 L648.0 479.0 L644.6 474.3 L641.6 469.5 L639.1 464.6 L637.1 459.6 L635.4 454.6 L634.3 449.5 L633.6 444.4 L633.3 439.3 L633.6 434.2 L634.3 429.1 L635.4 424.0 L631.6 419.4 L628.2 414.7 L625.3 409.9 L622.8 405.0 L620.7 400.0 L619.1 395.0 L618.0 389.9 L617.3 384.8 L617.0 379.7 L617.3 374.6 L618.0 369.5 L619.1 364.5 L620.7 359.4 L622.8 354.5 L625.3 349.6 L628.3 344.8 L631.6 340.0 L635.4 335.4 L639.7 330.9 L644.3 326.6 L649.3 322.4 L654.7 318.3 L660.4 314.4 L666.5 310.7 L668.1 305.7 L670.2 300.7 L672.7 295.8 L675.7 291.0 L679.1 286.3 L682.9 281.7 L687.1 277.2 L691.7 272.8 L696.7 268.6 L702.1 264.6 L707.9 260.7 L714.0 257.0 L720.4 253.5 L727.1 250.2 L734.1 247.0 L741.4 244.2 L749.0 241.5 L756.7 239.0 L764.7 236.8 L772.9 234.9 L781.2 233.2 L789.7 231.7 L798.3 230.5 L807.0 229.6 L813.4 226.1 L820.2 222.8 L827.2 219.7 L834.5 216.8 L842.0 214.1 L849.8 211.7 L857.8 209.5 L866.0 207.5 L874.3 205.8 L882.8 204.4 L891.4 203.2 L900.1 202.2 L908.9 201.6 L917.7 201.2 L926.6 201.0 L935.4 201.2 L944.2 201.6 L953.0 202.2 L961.7 203.2 L970.3 204.3 L978.8 205.8 L987.1 207.5 L995.3 209.4 L1003.3 211.6 L1012.1 211.0 L1020.9 210.6 L1029.7 210.4 L1038.6 210.6 L1047.4 211.0 L1056.2 211.7 L1064.9 212.6 L1073.5 213.8 L1082.0 215.2 L1090.3 216.9 L1098.5 218.9 L1106.5 221.1 L1114.2 223.5 L1121.8 226.2 L1129.1 229.1 L1136.1 232.2 L1142.8 235.5 L1149.3 239.0 L1155.4 242.7 L1161.1 246.6 L1166.5 250.7 L1171.5 254.9 L1176.1 259.2 L1180.4 263.7 L1188.1 266.2 L1195.7 268.8 L1203.0 271.7 L1210.0 274.9 L1216.7 278.2 L1223.1 281.7 L1229.2 285.4 L1235.0 289.3 L1240.3 293.3 L1245.4 297.5 L1250.0 301.9 L1254.2 306.4 L1258.0 311.0 L1261.4 315.7 L1264.4 320.5 L1266.9 325.4 L1268.9 330.4 L1270.6 335.4 L1271.7 340.5 L1272.4 345.6 L1272.7 350.7 L1272.4 355.8 L1271.7 360.9 L1270.6 366.0 L1274.4 370.6 L1277.8 375.3 L1280.7 380.1 L1283.2 385.0 L1285.3 390.0 L1286.9 395.0 L1288.0 400.1 L1288.7 405.2 L1289.0 410.3 L1288.7 415.4 L1288.0 420.5 L1286.9 425.5 L1285.3 430.6 L1283.2 435.5 L1280.7 440.4 L1277.7 445.2 L1274.4 450.0 L1270.6 454.6 L1266.3 459.1 L1261.7 463.4 L1256.7 467.6 L1251.3 471.7 L1245.6 475.6Z" fill="none" stroke="#d4d8dc" stroke-width="1.5" stroke-opacity="0.85"/>
<path d="M1181.6 376.2 L1180.3 380.3 L1178.8 384.2 L1176.8 388.2 L1174.5 392.0 L1171.9 395.8 L1168.9 399.5 L1165.5 403.1 L1161.8 406.6 L1157.9 410.0 L1153.6 413.3 L1149.0 416.4 L1144.1 419.3 L1139.0 422.1 L1133.6 424.8 L1127.9 427.3 L1122.1 429.6 L1116.0 431.7 L1109.8 433.6 L1103.4 435.4 L1096.8 436.9 L1090.1 438.2 L1083.3 439.3 L1076.4 440.3 L1069.5 441.0 L1064.4 443.8 L1059.0 446.5 L1053.5 449.0 L1047.7 451.4 L1041.7 453.5 L1035.5 455.5 L1029.1 457.3 L1022.6 458.9 L1015.9 460.2 L1009.1 461.4 L1002.2 462.4 L995.3 463.1 L988.3 463.6 L981.2 464.0 L974.1 464.1 L967.0 463.9 L960.0 463.6 L953.0 463.0 L946.0 462.3 L939.2 461.3 L932.4 460.1 L925.7 458.7 L919.2 457.1 L912.9 455.3 L905.9 455.9 L898.8 456.2 L891.7 456.4 L884.7 456.3 L877.6 456.0 L870.6 455.5 L863.6 454.8 L856.7 453.8 L849.9 452.7 L843.2 451.3 L836.7 449.8 L830.3 448.0 L824.1 446.1 L818.1 443.9 L812.2 441.6 L806.6 439.1 L801.3 436.4 L796.2 433.6 L791.3 430.6 L786.8 427.5 L782.5 424.2 L778.6 420.8 L774.9 417.3 L771.6 413.7 L765.4 411.8 L759.3 409.7 L753.4 407.4 L747.8 405.0 L742.3 402.3 L737.2 399.5 L732.3 396.6 L727.6 393.5 L723.3 390.3 L719.3 386.9 L715.6 383.4 L712.2 379.8 L709.2 376.1 L706.5 372.4 L704.1 368.5 L702.1 364.6 L700.5 360.6 L699.3 356.6 L698.4 352.5 L697.9 348.5 L697.8 344.4 L698.0 340.3 L698.6 336.2 L699.6 332.2 L696.5 328.5 L693.7 324.7 L691.3 320.9 L689.2 317.0 L687.5 313.0 L686.2 309.0 L685.2 305.0 L684.7 300.9 L684.4 296.8 L684.6 292.7 L685.2 288.6 L686.1 284.6 L687.4 280.6 L689.0 276.6 L691.1 272.7 L693.4 268.8 L696.2 265.1 L699.3 261.4 L702.7 257.8 L706.4 254.3 L710.5 251.0 L714.9 247.8 L719.5 244.7 L724.4 241.8 L725.7 237.7 L727.2 233.8 L729.2 229.8 L731.5 226.0 L734.1 222.2 L737.1 218.5 L740.5 214.9 L744.2 211.4 L748.1 208.0 L752.4 204.7 L757.0 201.6 L761.9 198.7 L767.0 195.9 L772.4 193.2 L778.1 190.7 L783.9 188.4 L790.0 186.3 L796.2 184.4 L802.6 182.6 L809.2 181.1 L815.9 179.8 L822.7 178.7 L829.6 177.7 L836.5 177.0 L841.6 174.2 L847.0 171.5 L852.5 169.0 L858.3 166.6 L864.3 164.5 L870.5 162.5 L876.9 160.7 L883.4 159.1 L890.1 157.8 L896.9 156.6 L903.8 155.6 L910.7 154.9 L917.7 154.4 L924.8 154.0 L931.9 153.9 L939.0 154.1 L946.0 154.4 L953.0 155.0 L960.0 155.7 L966.8 156.7 L973.6 157.9 L980.3 159.3 L986.8 160.9 L993.1 162.7 L1000.1 162.1 L1007.2 161.8 L1014.3 161.6 L1021.3 161.7 L1028.4 162.0 L1035.4 162.5 L1042.4 163.2 L1049.3 164.2 L1056.1 165.3 L1062.8 166.7 L1069.3 168.2 L1075.7 170.0 L1081.9 171.9 L1087.9 174.1 L1093.8 176.4 L1099.4 178.9 L1104.7 181.6 L1109.8 184.4 L1114.7 187.4 L1119.2 190.5 L1123.5 193.8 L1127.4 197.2 L1131.1 200.7 L1134.4 204.3 L1140.6 206.2 L1146.7 208.3 L1152.6 210.6 L1158.2 213.0 L1163.7 215.7 L1168.8 218.5 L1173.7 221.4 L1178.4 224.5 L1182.7 227.7 L1186.7 231.1 L1190.4 234.6 L1193.8 238.2 L1196.8 241.9 L1199.5 245.6 L1201.9 249.5 L1203.9 253.4 L1205.5 257.4 L1206.7 261.4 L1207.6 265.5 L1208.1 269.5 L1208.2 273.6 L1208.0 277.7 L1207.4 281.8 L1206.4 285.8 L1209.5 289.5 L1212.3 293.3 L1214.7 297.1 L1216.8 301.0 L1218.5 305.0 L1219.8 309.0 L1220.8 313.0 L1221.3 317.1 L1221.6 321.2 L1221.4 325.3 L1220.8 329.4 L1219.9 333.4 L1218.6 337.4 L1217.0 341.4 L1214.9 345.3 L1212.6 349.2 L1209.8 352.9 L1206.7 356.6 L1203.3 360.2 L1199.6 363.7 L1195.5 367.0 L1191.1 370.2 L1186.5 373.3Z" fill="none" stroke="#d4d8dc" stroke-width="1.5" stroke-opacity="0.85"/>
<path d="M636 302 L602 431 L585 514 L615 556 M698 234 L672 325 L640 420 L619 508 M724 243 L705 325 L677 440 M640 297 L742 217 M612 449 L684 602 M661 449 L723 527 M680 631 L710 641 M726 543 L862 592 M739 624 L870 667 M667 495 L765 560 M1160 201 L1304 364 L1294 420 M1200 210 L1323 449 L1288 579 L1222 615 M1233 289 L1213 388 M1280 452 L1254 569 M1254 426 L1238 485 M1254 498 L1144 550 M1235 589 L1105 647 M1180 641 L1079 676 M1215 517 L1105 576 M1105.6 657.0 L900.4 675.7 L715.3 621.3 L620.9 514.4 L653.4 395.9 L800.4 311.0 L1005.6 292.3 L1190.7 346.7 L1285.1 453.6 L1252.6 572.1Z M1123.1 676.8 L894.4 697.7 L688.0 637.0 L582.9 517.8 L619.1 385.8 L782.9 291.2 L1011.6 270.3 L1218.0 331.0 L1323.1 450.2 L1286.9 582.2Z M1099.0 560.4 L902.7 578.4 L725.6 526.3 L635.4 424.0 L666.5 310.7 L807.0 229.6 L1003.3 211.6 L1180.4 263.7 L1270.6 366.0 L1239.5 479.3Z M1114.4 577.8 L897.4 597.7 L701.7 540.1 L601.9 427.1 L636.3 301.8 L791.6 212.2 L1008.6 192.3 L1204.3 249.9 L1304.1 362.9 L1269.7 488.2Z M1069.5 441.0 L912.9 455.3 L771.6 413.7 L699.6 332.2 L724.4 241.8 L836.5 177.0 L993.1 162.7 L1134.4 204.3 L1206.4 285.8 L1181.6 376.2Z M1082.0 455.2 L908.5 471.0 L752.1 425.0 L672.3 334.7 L699.8 234.5 L824.0 162.8 L997.5 147.0 L1153.9 193.0 L1233.7 283.3 L1206.2 383.5Z" fill="none" stroke="rgba(225,228,230,0.45)" stroke-width="1" stroke-dasharray="6 3"/>
<path d="M1643 924L1920 763M0 769L268 924" fill="none" stroke="#a2a2a2" stroke-width="1.4" stroke-dasharray="16 3"/>
<path d="M970.7 372.0 L946.9 374.2 L925.5 367.9 L914.5 355.5 L918.3 341.8 L935.3 332.0 L959.1 329.8 L980.5 336.1 L991.5 348.5 L987.7 362.2Z" fill="none" stroke="#d5dadf" stroke-width="1.6"/>
<circle cx="930.5" cy="228.0" r="3.3" fill="#a3a7aa"/>
<circle cx="1017.1" cy="236.2" r="3.3" fill="#a3a7aa"/>
<circle cx="852.6" cy="251.9" r="3.3" fill="#a3a7aa"/>
<circle cx="1078.7" cy="272.0" r="3.3" fill="#a3a7aa"/>
<circle cx="812.4" cy="296.5" r="3.3" fill="#a3a7aa"/>
<circle cx="925.5" cy="294.6" r="3.3" fill="#a3a7aa"/>
<circle cx="940.5" cy="307.1" r="3.3" fill="#a3a7aa"/>
<circle cx="988.3" cy="312.8" r="3.3" fill="#a3a7aa"/>
<circle cx="1033.5" cy="304.6" r="3.3" fill="#a3a7aa"/>
<circle cx="897.2" cy="319.7" r="3.3" fill="#a3a7aa"/>
<circle cx="1092.5" cy="322.2" r="3.3" fill="#a3a7aa"/>
<circle cx="828.1" cy="323.5" r="3.3" fill="#a3a7aa"/>
<circle cx="1022.2" cy="332.2" r="3.3" fill="#a3a7aa"/>
<circle cx="826.2" cy="346.1" r="3.3" fill="#a3a7aa"/>
<circle cx="875.9" cy="344.8" r="3.3" fill="#a3a7aa"/>
<circle cx="1110.7" cy="349.2" r="3.3" fill="#a3a7aa"/>
<circle cx="1029.7" cy="359.2" r="3.3" fill="#a3a7aa"/>
<circle cx="1052.9" cy="366.8" r="3.3" fill="#a3a7aa"/>
<circle cx="883.4" cy="372.4" r="3.3" fill="#a3a7aa"/>
<circle cx="924.2" cy="375.6" r="3.3" fill="#a3a7aa"/>
<circle cx="777.9" cy="379.3" r="3.3" fill="#a3a7aa"/>
<circle cx="889.0" cy="382.5" r="3.3" fill="#a3a7aa"/>
<circle cx="1008.4" cy="384.4" r="3.3" fill="#a3a7aa"/>
<circle cx="1037.9" cy="386.2" r="3.3" fill="#a3a7aa"/>
<circle cx="917.3" cy="392.5" r="3.3" fill="#a3a7aa"/>
<circle cx="965.7" cy="396.3" r="3.3" fill="#a3a7aa"/>
<circle cx="975.1" cy="390.0" r="3.3" fill="#a3a7aa"/>
<circle cx="821.2" cy="406.3" r="3.3" fill="#a3a7aa"/>
<circle cx="1127.7" cy="411.4" r="3.3" fill="#a3a7aa"/>
<circle cx="795.5" cy="442.1" r="3.3" fill="#a3a7aa"/>
<circle cx="1118.9" cy="432.7" r="3.3" fill="#a3a7aa"/>
<circle cx="769.1" cy="465.4" r="3.3" fill="#a3a7aa"/>
<circle cx="1078.7" cy="467.3" r="3.3" fill="#a3a7aa"/>
<circle cx="1137.1" cy="498.6" r="3.3" fill="#a3a7aa"/>
<circle cx="786.7" cy="531.3" r="3.3" fill="#a3a7aa"/>
<circle cx="1085.0" cy="558.9" r="3.3" fill="#a3a7aa"/>
<circle cx="953" cy="309" r="3.8" fill="#2a2a30" stroke="#8a8f95" stroke-width="1"/>
<circle cx="953" cy="352" r="3.8" fill="#2a2a30" stroke="#8a8f95" stroke-width="1"/>
<circle cx="953" cy="395" r="3.8" fill="#2a2a30" stroke="#8a8f95" stroke-width="1"/>
<text x="303" y="208" font-size="10" fill="#2f2f2f" font-family="Liberation Sans" transform="rotate(-30 303 208)" text-anchor="middle">-100</text>
<text x="465" y="300" font-size="10" fill="#2f2f2f" font-family="Liberation Sans" transform="rotate(-30 465 300)" text-anchor="middle">-75</text>
<text x="624" y="391" font-size="10" fill="#2f2f2f" font-family="Liberation Sans" transform="rotate(-30 624 391)" text-anchor="middle">-50</text>
<text x="782" y="482" font-size="10" fill="#2f2f2f" font-family="Liberation Sans" transform="rotate(-30 782 482)" text-anchor="middle">-25</text>
<text x="1128" y="482" font-size="10" fill="#2f2f2f" font-family="Liberation Sans" transform="rotate(-30 1128 482)" text-anchor="middle">25</text>
<text x="1287" y="390" font-size="10" fill="#2f2f2f" font-family="Liberation Sans" transform="rotate(-30 1287 390)" text-anchor="middle">50</text>
<text x="1443" y="300" font-size="10" fill="#2f2f2f" font-family="Liberation Sans" transform="rotate(-30 1443 300)" text-anchor="middle">75</text>
<text x="1602" y="206" font-size="10" fill="#2f2f2f" font-family="Liberation Sans" transform="rotate(-30 1602 206)" text-anchor="middle">100</text>
<text x="1762" y="114" font-size="10" fill="#2f2f2f" font-family="Liberation Sans" transform="rotate(-30 1762 114)" text-anchor="middle">125</text>
<g>
<path d="M1857 112L1891 127L1857 147L1823 127Z" fill="rgba(200,200,200,.72)"/>
<path d="M1823 127L1857 147L1857 187L1826 166Z" fill="rgba(190,190,190,.72)"/>
<path d="M1857 147L1891 127L1888 166L1857 187Z" fill="rgba(180,180,180,.72)"/>
<path d="M1857 112L1891 127L1857 147L1823 127Z M1857 147V187" fill="none" stroke="rgba(140,140,140,.6)" stroke-width="0.8"/>
<text x="1858" y="133" font-size="7" fill="#777" font-family="Liberation Sans" transform="rotate(25 1858 133)" text-anchor="middle">TOP</text>
<text x="1838" y="157" font-size="7" fill="#777" font-family="Liberation Sans" transform="rotate(28 1838 157)" text-anchor="middle">FRONT</text>
<text x="1873" y="158" font-size="7" fill="#777" font-family="Liberation Sans" transform="rotate(-35 1873 158)" text-anchor="middle">RIGHT</text>
<path d="M1857 111V104" stroke="#2ab52a" stroke-width="1.5"/>
<text x="1857" y="102" font-size="9" fill="#2ab52a" font-family="Liberation Sans" text-anchor="middle" font-weight="700">Y</text>
<path d="M1824 166L1819 169" stroke="#2b3fd0" stroke-width="1.5"/>
<text x="1813" y="178" font-size="10" fill="#2b3fd0" font-family="Liberation Sans" text-anchor="middle" font-weight="700">Z</text>
<path d="M1889 166L1895 169" stroke="#c83030" stroke-width="1.5"/>
<text x="1899" y="179" font-size="10" fill="#c83030" font-family="Liberation Sans" text-anchor="middle" font-weight="700">X</text>
</g>
</svg><div id="tb" class="a">
<div class="a" style="left:0;top:80px;width:1920px;height:1px;background:#dadada"></div>
<div class="a" style="left:12px;top:10px;width:110px;height:61px;border:1px solid #dadada;border-radius:6px"></div>
<div class="t" style="left:42px;top:35px;font-size:10px;font-weight:700;color:#333">DESIGN<span class="dd" style="margin-left:5px"></span></div>
<div class="t tab" style="left:150px">SOLID</div>
<div class="t tab" style="left:228px">SURFACE</div>
<div class="t tab" style="left:321px">MESH</div>
<div class="t tab" style="left:394px">SHEET METAL</div>
<div class="t tab" style="left:507px">PLASTIC</div>
<div class="t tab" style="left:595px">UTILITIES</div>
<div class="a" style="left:671px;top:0;width:67px;height:22px;background:#cde8f6;border-bottom:3px solid #0696d7"></div>
<div class="t tab" style="left:684px;color:#0696d7">SKETCH</div>
<div class="t grp" style="left:257px">CREATE<span class="dd"></span></div>
<div class="t grp" style="left:525px">MODIFY<span class="dd"></span></div>
<div class="t grp" style="left:884px">CONSTRAINTS<span class="dd"></span></div>
<div class="t grp" style="left:1204px">INSPECT<span class="dd"></span></div>
<div class="t grp" style="left:1283px">INSERT<span class="dd"></span></div>
<div class="a" style="left:1416px;top:21px;width:103px;height:59px;background:#cfe8f5"></div>
<div class="t grp" style="left:1352px">SELECT<span class="dd"></span></div>
<div class="t grp" style="left:1426px">FINISH SKETCH<span class="dd"></span></div>
<div class="sep" style="left:437px"></div>
<div class="sep" style="left:662px"></div>
<div class="sep" style="left:1190px"></div>
<div class="sep" style="left:1269px"></div>
<div class="sep" style="left:1338px"></div>
<svg class="a" style="left:0;top:0" width="1920" height="80" viewBox="0 0 1920 80">
<g fill="none" stroke="#505050" stroke-width="1.2">
<!-- line -->
<path d="M140 49.5H157M159 34.5A7.5 7.5 0 0 1 159 49.5"/>
<!-- rect -->
<rect x="181.5" y="31.5" width="28" height="20"/>
<!-- circle -->
<circle cx="238.5" cy="41.5" r="15"/>
<!-- spline -->
<path d="M267.5 56C268 46 270 38 273.5 36.5C279 35 284 47 290.5 47C295 46 297 36 296.5 27"/>
<!-- mirror -->
<path d="M309.8 56.3L323.3 28.5V56.3Z"/>
<path d="M352.5 28V56M383.5 28V56"/>
<path d="M398.5 55C400 45 406 37 414 33C418 31 421 29.5 425.5 28.5"/>
<!-- modify -->
<path d="M449.5 45V57.5M469 26.5H481"/>
<path d="M516.2 28.4H524"/>
<path d="M535.5 57.7C536.2 52 537 47 537.8 44.1"/><path d="M564.8 41.4C565.6 36 566 31 566.4 26.1"/>
<path d="M610 35.5H590.7A6.45 6.45 0 0 0 590.7 48.4H610"/>
<path d="M621.5 45V57.5M641 26.5H653"/>
</g>
<g fill="none" stroke="#1a86d9" stroke-width="1.2">
<path d="M231 50L246 33"/>
<path d="M325.4 28.5V56.3H339.2Z"/>
<path d="M354 36.5H382"/>
<path d="M449.5 44C450 33 457 27 467 26.5"/>
<path d="M492 28.4H508" stroke-dasharray="4 2"/>
<path d="M537.3 42.5C538.5 38.5 540.5 36.1 543 36.1C546.5 36.1 549 41 551.6 44.1C554 47 556.5 49.5 558.9 49.5C561.5 49.5 563.5 46.5 564.8 43.2" stroke-width="1.4"/>
<path d="M610 30.4H589.6A11.6 11.6 0 0 0 589.6 53.6H610" stroke-width="1.2"/>
<path d="M621.5 44L640 26.5"/>
</g>
<g fill="#1a86d9">
<rect x="137" y="48" width="3" height="3"/><rect x="157" y="48" width="3" height="3"/><rect x="157" y="33" width="3" height="3"/>
<rect x="180" y="30" width="3" height="3"/><rect x="208" y="50" width="3" height="3"/>
<rect x="237" y="40" width="3" height="3"/>
<path d="M247.5 31.5L241.5 33L246 37.5Z M229.5 51.5L235.5 50L231 45.5Z"/>
<rect x="266" y="54.5" width="3" height="3"/><rect x="272" y="35" width="3" height="3"/><rect x="289" y="45.5" width="3" height="3"/><rect x="295" y="25.5" width="3" height="3"/>
<path d="M353 36.5L358 34V39Z M383 36.5L378 34V39Z"/>
<rect x="397" y="53.5" width="3" height="3"/><rect x="405" y="35" width="3" height="3"/><rect x="424" y="27" width="3" height="3"/>
</g>
<!-- scissors -->
<path d="M510.3 26.1L513.9 29.8V45.5H510.3Z" fill="#2b2b2b"/>
<path d="M500 32V37.7L509.4 46.8L511.8 44.8L511.5 41.5Z" fill="#2b2b2b"/>
<circle cx="511.6" cy="45.3" r="1.3" fill="#f2f2f2"/>
<ellipse cx="510" cy="52.5" rx="3" ry="4.4" transform="rotate(12 510 52.5)" fill="none" stroke="#2b2b2b" stroke-width="1.8"/>
<ellipse cx="517.8" cy="49.6" rx="3.4" ry="4.3" transform="rotate(-42 517.8 49.6)" fill="none" stroke="#2b2b2b" stroke-width="1.8"/>
<!-- constraints -->
<g fill="none" stroke="#d22" stroke-width="1.2">
<path d="M682.3 51.6H699.1M683 55.7L686.7 51.8M688.2 55.7L691.9 51.8M693.3 55.7L697 51.8"/>
<path d="M689.6 28V44.8M685.2 29.1L689.6 32.8M685.2 34.2L689.6 37.9M685.2 39.3L689.6 43"/>
<path d="M719.5 26V56"/>
<circle cx="773" cy="44.5" r="11.5"/>
<path d="M851 54L870 31"/>
<path d="M890.5 36L910 54"/>
<path d="M978.5 54.5L991.5 32.5L1005 54.5Z"/>
<circle cx="1035" cy="41.5" r="13.5"/>
<path d="M1082 38L1091 29"/>
<path d="M1116 32.4H1108.4V51.4H1116"/>
<path d="M1120.4 28V37.5M1120.4 40.4V44M1120.4 46.6V55.7"/>
<path d="M1157.2 30.2L1175.8 48.8"/>
</g>
<g fill="none" stroke="#555" stroke-width="1.2">
<path d="M692.6 28V44.8M682.3 48.4H699.1"/>
<path d="M721 56.5H750"/>
<path d="M772 28L792 46"/>
<path d="M856 57L875 36"/>
<path d="M904 46L919 29"/>
<circle cx="1035" cy="41.5" r="8"/>
<path d="M1064 55L1081 40"/>
<path d="M1125.1 32.4H1132.8V51.4H1125.1"/>
<path d="M1151.7 35.3C1152.5 37.5 1154.5 39.3 1158 39.6C1160.5 39.8 1162.5 39.7 1164 40.3M1165.6 42.6C1165.6 45 1165.8 47 1166.5 49C1167.3 51.5 1168.8 53.2 1170.7 53.6"/>
</g>
<rect x="718" y="54.5" width="3" height="3" fill="#d22"/>
<rect x="810" y="35" width="20" height="4" fill="#d22"/>
<rect x="810" y="44" width="20" height="4" fill="#555"/>
<path d="M940.5 41V34A8 8 0 0 1 956.5 34V41" fill="none" stroke="#d9545b" stroke-width="2.2"/>
<rect x="936.5" y="41" width="24" height="16" rx="1" fill="#df8a8e" stroke="#c9474e" stroke-width="1.2"/>
<path d="M948.5 46V52" stroke="#b83a40" stroke-width="1"/>
<path d="M1064 35L1073 44" stroke="#222" stroke-width="1.3"/>
<path d="M1074.5 45.5L1067.5 43.5L1072.5 38.5Z" fill="#222"/>
<rect x="1165.1" y="37.7" width="3.2" height="3.2" fill="#d22"/>
<!-- inspect -->
<path d="M1217 38H1243M1216.5 34V42M1243.5 34V42" stroke="#444" stroke-width="1"/>
<path d="M1217 38L1221 36V40Z M1243 38L1239 36V40Z" fill="#444"/>
<rect x="1216" y="43.5" width="28" height="6.5" fill="#f5a81c"/>
<path d="M1219 43.5V46M1222 43.5V45M1225 43.5V46M1228 43.5V45M1231 43.5V46M1234 43.5V45M1237 43.5V46M1240 43.5V45" stroke="#8a5a00" stroke-width="0.8"/>
<!-- insert -->
<rect x="1289" y="27" width="29" height="29" fill="#6cbcf5"/>
<path d="M1289 56V44C1293 38 1297 36 1301 42C1305 47 1309 44 1312 41C1315 39 1317 42 1318 44V56Z" fill="#3a8fd4"/>
<circle cx="1310" cy="35" r="3" fill="#fff6b0"/>
<!-- select -->
<rect x="1356" y="23" width="39" height="38" fill="#0a8bd6"/>
<rect x="1360.5" y="27.5" width="28" height="20" fill="none" stroke="#3dcf4a" stroke-width="1" stroke-dasharray="3 2"/>
<path d="M1381 42V55L1384 52L1386.5 57.5L1388.5 56.5L1386 51H1390Z" fill="#fff" stroke="#222" stroke-width="0.9"/>
<!-- finish -->
<circle cx="1467" cy="42" r="15.5" fill="#5fbf00"/>
<path d="M1459 42L1465 48L1475.5 36.5" fill="none" stroke="#fff" stroke-width="3.6"/>
</svg>
</div>
<svg width="0" height="0" style="position:absolute"><defs>
<symbol id="eye" viewBox="0 0 16 10"><path d="M0.3 5C3.2 -0.6 12.8 -0.6 15.7 5C12.8 10.6 3.2 10.6 0.3 5Z" fill="#9c9c9c"/><circle cx="8" cy="5" r="2.9" fill="#f2f2f2"/><circle cx="8" cy="5" r="1.6" fill="#9c9c9c"/></symbol>
<symbol id="eyeoff" viewBox="0 0 16 12"><path d="M0.7 6.2C3.3 1.4 12.7 1.4 15.3 6.2C12.7 11 3.3 11 0.7 6.2Z" fill="none" stroke="#9a9a9a" stroke-width="1.1"/><circle cx="8" cy="6.2" r="2.5" fill="none" stroke="#9a9a9a" stroke-width="1.1"/><path d="M2.5 0.4L13.5 11.6" stroke="#8e8e8e" stroke-width="1.1"/></symbol>
<symbol id="folder" viewBox="0 0 17 13"><path d="M0 0.5H6.5L7.5 2H17V13H0Z" fill="#9e9e9e"/><path d="M0 3.2H17" stroke="#bdbdbd" stroke-width="0.8"/></symbol>
<symbol id="sklock" viewBox="0 0 16 17"><path d="M1.8 3.8V13.9M3.3 2.3H12.8M14.1 3.8V9M3.3 15.2H9" fill="none" stroke="#4a4a4a" stroke-width="1" stroke-dasharray="4.2 1.2"/><rect x="0.5" y="1" width="2.6" height="2.6" fill="#333"/><rect x="12.8" y="1" width="2.6" height="2.6" fill="#333"/><rect x="0.5" y="13.9" width="2.6" height="2.6" fill="#333"/><path d="M11 12.5V11.3A1.6 1.6 0 0 1 14.2 11.3V12.5" fill="none" stroke="#c62828" stroke-width="1.2"/><rect x="9.7" y="12.6" width="6" height="3.9" fill="#e6a3a6" stroke="#c62828" stroke-width="1"/></symbol>
<symbol id="skpen" viewBox="0 0 16 17"><path d="M1.8 3.8V13.9M3.3 2.3H12.8M14.1 3.8V8.5M3.3 15.2H8.5" fill="none" stroke="#4a4a4a" stroke-width="1" stroke-dasharray="4.2 1.2"/><rect x="0.5" y="1" width="2.6" height="2.6" fill="#1a86e8"/><rect x="12.8" y="1" width="2.6" height="2.6" fill="#1a86e8"/><rect x="0.5" y="13.9" width="2.6" height="2.6" fill="#1a86e8"/><path d="M9.3 16.4L10 14L14.3 9.7L16 11.4L11.7 15.7Z" fill="#f2b230"/><path d="M14.3 9.7L16 11.4" stroke="#e84848" stroke-width="1.8"/><path d="M9.3 16.4L10 14L11.7 15.7Z" fill="#555"/></symbol>
<symbol id="plane" viewBox="0 0 16 17"><path d="M4.3 5V1.6H15.3V12.4H11.9" fill="none" stroke="#3a3a3a" stroke-width="1.1"/><rect x="0.2" y="5" width="11.7" height="11.7" fill="#e8995a"/><rect x="4.9" y="5" width="7" height="6.6" fill="#edb98f"/></symbol>
<symbol id="gear" viewBox="0 0 14 14"><g fill="#8a8a8a"><circle cx="7" cy="7" r="4.9"/><rect x="5.6" y="0.2" width="2.8" height="13.6"/><rect x="0.2" y="5.6" width="13.6" height="2.8"/><rect x="5.6" y="0.2" width="2.8" height="13.6" transform="rotate(45 7 7)"/><rect x="5.6" y="0.2" width="2.8" height="13.6" transform="rotate(-45 7 7)"/></g><circle cx="7" cy="7" r="1.9" fill="#f2f2f2"/></symbol>
<symbol id="tri_r" viewBox="0 0 10 12"><path d="M1.5 0.8L9.3 6L1.5 11.2Z" fill="#e9e9e9" stroke="#222" stroke-width="1.1"/></symbol>
<symbol id="tri_d" viewBox="0 0 12 12"><linearGradient id="tg" x1="0" y1="0" x2="1" y2="1"><stop offset="0" stop-color="#fff"/><stop offset="1" stop-color="#555"/></linearGradient><path d="M11 0.6V11.4H0.6Z" fill="url(#tg)" stroke="#111" stroke-width="1.1"/></symbol>
</defs></svg>
<div class="a" style="left:4px;top:88px;width:300px;height:25px;background:#f2f2f2"></div>
<svg class="a" style="left:9px;top:97px" width="11" height="8"><path d="M0.3 4.3L5 0.8V7.6Z M5.3 4.3L10 0.8V7.6Z" fill="#222"/></svg>
<div class="t" style="left:29px;top:96px;font-size:10px;color:#555">BROWSER</div>
<svg class="a" style="left:282px;top:95px" width="11" height="11"><circle cx="5.5" cy="5.5" r="5" fill="#222"/><rect x="2.8" y="4.8" width="5.4" height="1.6" fill="#fff"/></svg>
<svg class="a" style="left:20px;top:122px" width="12" height="12"><use href="#tri_d"/></svg>
<div class="row" style="left:40px;top:118px;width:164px"></div>
<svg class="a" style="left:43px;top:123px" width="16" height="10"><use href="#eye"/></svg>
<div class="a" style="left:65px;top:120px;width:114px;height:16px;background:#9b9b9b"></div>
<svg class="a" style="left:68px;top:120px" width="16" height="16"><path d="M0.8 4.7L4.8 0.8H15.2V11.6L11.8 15.4H0.8Z" fill="#dfe3ea" stroke="#2a2d33" stroke-width="1.1" stroke-linejoin="round"/><path d="M1.5 4.7L4.9 1.4H14.6L11.8 4.7Z" fill="#fafafa"/><path d="M11.8 4.7L14.6 1.4V11.4L11.8 14.8Z" fill="#eef0f3"/><path d="M0.8 4.7H11.8V15.4M11.8 4.7L15.2 0.8" fill="none" stroke="#c9ccd2" stroke-width="0.6"/></svg>
<div class="t" style="left:98px;top:123px;font-size:11px;font-weight:700;color:#fff">Pumpkin v11</div>
<svg class="a" style="left:183px;top:121px" width="14" height="14"><circle cx="7" cy="7" r="6" fill="#fff" stroke="#222" stroke-width="1.2"/><circle cx="7" cy="7" r="2.5" fill="#222"/></svg>
<svg class="a" style="left:40px;top:146px" width="10" height="12"><use href="#tri_r"/></svg>
<div class="row" style="left:58px;top:142px;width:130px"><span class="lbl" style="left:29px">Document Settings</span></div>
<svg class="a" style="left:61px;top:144px" width="14" height="14"><use href="#gear"/></svg>
<svg class="a" style="left:40px;top:170px" width="10" height="12"><use href="#tri_r"/></svg>
<div class="row" style="left:58px;top:166px;width:110px"><span class="lbl" style="left:33px">Named Views</span></div>
<svg class="a" style="left:61px;top:169px" width="17" height="13"><use href="#folder"/></svg>
<svg class="a" style="left:40px;top:194px" width="10" height="12"><use href="#tri_r"/></svg>
<div class="row" style="left:58px;top:190px;width:95px"><span class="lbl" style="left:58px">Origin</span></div>
<svg class="a" style="left:61px;top:193px" width="16" height="12"><use href="#eyeoff"/></svg>
<svg class="a" style="left:86px;top:193px" width="17" height="13"><use href="#folder"/></svg>
<svg class="a" style="left:40px;top:218px" width="10" height="12"><use href="#tri_r"/></svg>
<div class="row" style="left:58px;top:214px;width:103px"><span class="lbl" style="left:58px">Bodies</span></div>
<svg class="a" style="left:61px;top:219px" width="16" height="10"><use href="#eye"/></svg>
<svg class="a" style="left:86px;top:217px" width="17" height="13"><use href="#folder"/></svg>
<svg class="a" style="left:39px;top:242px" width="12" height="12"><use href="#tri_d"/></svg>
<div class="row" style="left:58px;top:238px;width:115px"><span class="lbl" style="left:58px">Sketches</span></div>
<svg class="a" style="left:61px;top:243px" width="16" height="10"><use href="#eye"/></svg>
<svg class="a" style="left:86px;top:241px" width="17" height="13"><use href="#folder"/></svg>
<div class="row" style="left:76px;top:262px;width:123px"><span class="lbl" style="left:58px">Boundaries</span></div>
<svg class="a" style="left:79px;top:267px" width="16" height="10"><use href="#eye"/></svg>
<svg class="a" style="left:104px;top:263px" width="16" height="17"><use href="#sklock"/></svg>
<div class="row" style="left:76px;top:286px;width:123px"><span class="lbl" style="left:58px">FirstSketch</span></div>
<svg class="a" style="left:79px;top:291px" width="16" height="10"><use href="#eye"/></svg>
<svg class="a" style="left:104px;top:287px" width="16" height="17"><use href="#sklock"/></svg>
<div class="row" style="left:76px;top:310px;width:139px"><span class="lbl" style="left:58px">SecondSketch</span></div>
<svg class="a" style="left:79px;top:315px" width="16" height="10"><use href="#eye"/></svg>
<svg class="a" style="left:104px;top:311px" width="16" height="17"><use href="#sklock"/></svg>
<div class="row" style="left:76px;top:334px;width:127px"><span class="lbl" style="left:58px">ThirdSketch</span></div>
<svg class="a" style="left:79px;top:339px" width="16" height="10"><use href="#eye"/></svg>
<svg class="a" style="left:104px;top:335px" width="16" height="17"><use href="#sklock"/></svg>
<div class="row" style="left:76px;top:358px;width:131px"><span class="lbl" style="left:58px">FourthSketch</span></div>
<svg class="a" style="left:79px;top:363px" width="16" height="10"><use href="#eye"/></svg>
<svg class="a" style="left:104px;top:359px" width="16" height="17"><use href="#sklock"/></svg>
<div class="row" style="left:76px;top:382px;width:167px"><span class="lbl" style="left:58px">SecondSketchDown</span></div>
<svg class="a" style="left:79px;top:387px" width="16" height="10"><use href="#eye"/></svg>
<svg class="a" style="left:104px;top:383px" width="16" height="17"><use href="#sklock"/></svg>
<div class="row" style="left:76px;top:406px;width:155px"><span class="lbl" style="left:58px">ThirdSketchDown</span></div>
<svg class="a" style="left:79px;top:409px" width="16" height="12"><use href="#eyeoff"/></svg>
<svg class="a" style="left:104px;top:407px" width="16" height="17"><use href="#sklock"/></svg>
<div class="row" style="left:76px;top:430px;width:107px"><span class="lbl" style="left:58px">Sketch8</span></div>
<svg class="a" style="left:79px;top:433px" width="16" height="12"><use href="#eyeoff"/></svg>
<svg class="a" style="left:104px;top:431px" width="16" height="17"><use href="#sklock"/></svg>
<div class="row" style="left:76px;top:454px;width:115px"><span class="lbl" style="left:58px">Sketch10</span></div>
<svg class="a" style="left:79px;top:457px" width="16" height="12"><use href="#eyeoff"/></svg>
<svg class="a" style="left:104px;top:455px" width="16" height="17"><use href="#skpen"/></svg>
<div class="row" style="left:76px;top:478px;width:115px"><span class="lbl" style="left:58px">Sketch13</span></div>
<svg class="a" style="left:79px;top:481px" width="16" height="12"><use href="#eyeoff"/></svg>
<svg class="a" style="left:104px;top:479px" width="16" height="17"><use href="#sklock"/></svg>
<div class="row" style="left:76px;top:502px;width:115px"><span class="lbl" style="left:58px">Sketch14</span></div>
<svg class="a" style="left:79px;top:505px" width="16" height="12"><use href="#eyeoff"/></svg>
<svg class="a" style="left:104px;top:503px" width="16" height="17"><use href="#sklock"/></svg>
<div class="row" style="left:76px;top:526px;width:115px"><span class="lbl" style="left:58px">Sketch15</span></div>
<svg class="a" style="left:79px;top:529px" width="16" height="12"><use href="#eyeoff"/></svg>
<svg class="a" style="left:104px;top:527px" width="16" height="17"><use href="#skpen"/></svg>
<div class="row" style="left:76px;top:550px;width:115px"><span class="lbl" style="left:58px">Sketch16</span></div>
<svg class="a" style="left:79px;top:553px" width="16" height="12"><use href="#eyeoff"/></svg>
<svg class="a" style="left:104px;top:551px" width="16" height="17"><use href="#sklock"/></svg>
<svg class="a" style="left:39px;top:578px" width="12" height="12"><use href="#tri_d"/></svg>
<div class="row" style="left:58px;top:574px;width:131px"><span class="lbl" style="left:58px">Construction</span></div>
<svg class="a" style="left:61px;top:579px" width="16" height="10"><use href="#eye"/></svg>
<svg class="a" style="left:86px;top:577px" width="17" height="13"><use href="#folder"/></svg>
<div class="row" style="left:76px;top:598px;width:99px"><span class="lbl" style="left:58px">Plane1</span></div>
<svg class="a" style="left:79px;top:601px" width="16" height="12"><use href="#eyeoff"/></svg>
<svg class="a" style="left:104px;top:599px" width="16" height="17"><use href="#plane"/></svg>
<div class="row" style="left:76px;top:622px;width:99px"><span class="lbl" style="left:58px">Plane2</span></div>
<svg class="a" style="left:79px;top:625px" width="16" height="12"><use href="#eyeoff"/></svg>
<svg class="a" style="left:104px;top:623px" width="16" height="17"><use href="#plane"/></svg>
<div class="row" style="left:76px;top:646px;width:99px"><span class="lbl" style="left:58px">Plane3</span></div>
<svg class="a" style="left:79px;top:649px" width="16" height="12"><use href="#eyeoff"/></svg>
<svg class="a" style="left:104px;top:647px" width="16" height="17"><use href="#plane"/></svg>
<div class="row" style="left:76px;top:670px;width:99px"><span class="lbl" style="left:58px">Plane4</span></div>
<svg class="a" style="left:79px;top:673px" width="16" height="12"><use href="#eyeoff"/></svg>
<svg class="a" style="left:104px;top:671px" width="16" height="17"><use href="#plane"/></svg>
<div class="row" style="left:76px;top:694px;width:99px"><span class="lbl" style="left:58px">Plane5</span></div>
<svg class="a" style="left:79px;top:697px" width="16" height="12"><use href="#eyeoff"/></svg>
<svg class="a" style="left:104px;top:695px" width="16" height="17"><use href="#plane"/></svg>
<div class="row" style="left:76px;top:718px;width:99px"><span class="lbl" style="left:58px">Plane6</span></div>
<svg class="a" style="left:79px;top:721px" width="16" height="12"><use href="#eyeoff"/></svg>
<svg class="a" style="left:104px;top:719px" width="16" height="17"><use href="#plane"/></svg>
<div class="row" style="left:76px;top:742px;width:99px"><span class="lbl" style="left:58px">Plane7</span></div>
<svg class="a" style="left:79px;top:745px" width="16" height="12"><use href="#eyeoff"/></svg>
<svg class="a" style="left:104px;top:743px" width="16" height="17"><use href="#plane"/></svg>
<svg class="a" style="left:83px;top:252px" width="90" height="4"><path d="M0 3.5L2.5 0.5M5 3.5L7.5 0.5M10 3.5L12.5 0.5M15 3.5L17.5 0.5M20 3.5L22.5 0.5M25 3.5L27.5 0.5M30 3.5L32.5 0.5M35 3.5L37.5 0.5M40 3.5L42.5 0.5M45 3.5L47.5 0.5M50 3.5L52.5 0.5M55 3.5L57.5 0.5M60 3.5L62.5 0.5M65 3.5L67.5 0.5M70 3.5L72.5 0.5M75 3.5L77.5 0.5M80 3.5L82.5 0.5M85 3.5L87.5 0.5" stroke="#4a6fa5" stroke-width="1.2"/></svg>
<svg class="a" style="left:100px;top:276px" width="95" height="4"><path d="M0 3.5L2.5 0.5M5 3.5L7.5 0.5M10 3.5L12.5 0.5M15 3.5L17.5 0.5M20 3.5L22.5 0.5M25 3.5L27.5 0.5M30 3.5L32.5 0.5M35 3.5L37.5 0.5M40 3.5L42.5 0.5M45 3.5L47.5 0.5M50 3.5L52.5 0.5M55 3.5L57.5 0.5M60 3.5L62.5 0.5M65 3.5L67.5 0.5M70 3.5L72.5 0.5M75 3.5L77.5 0.5M80 3.5L82.5 0.5M85 3.5L87.5 0.5M90 3.5L92.5 0.5" stroke="#4a6fa5" stroke-width="1.2"/></svg>
<div class="a" style="left:4px;top:897px;width:300px;height:25px;background:#f2f2f2"></div>
<div class="t" style="left:29px;top:904px;font-size:10px;color:#555">COMMENTS</div>
<svg class="a" style="left:282px;top:903px" width="11" height="11"><circle cx="5.5" cy="5.5" r="5" fill="#222"/><rect x="2.8" y="4.8" width="5.4" height="1.6" fill="#fff"/><rect x="4.8" y="2.8" width="1.6" height="5.4" fill="#fff"/></svg><div class="a pal" style="left:1666px;top:208px;width:250px;height:453px;background:#f2f2f2;border:1px solid #c8c8c8">
<svg class="a" style="left:11px;top:7px" width="10" height="10"><circle cx="5" cy="5" r="4.5" fill="#333"/><rect x="2.5" y="4.3" width="5" height="1.4" fill="#fff"/></svg>
<div class="t" style="left:25px;top:7px;font-size:10px;color:#555">SKETCH PALETTE</div>
<svg class="a" style="left:234px;top:8px" width="11" height="8"><path d="M0.5 0.5L5 4L0.5 7.5Z M5.5 0.5L10 4L5.5 7.5Z" fill="#222"/></svg>
<div class="a" style="left:0;top:24px;width:248px;height:1px;background:#c9c9c9"></div>
<svg class="a" style="left:9px;top:36px" width="10" height="8"><path d="M0.5 0.5H9.5L5 7.5Z" fill="#333"/></svg>
<div class="t" style="left:25px;top:34px;font-size:11px;font-weight:700;color:#333">Options</div>
<div class="lbl" style="top:64px">Linetype</div>
<div class="lbl" style="top:94px">Look At</div>
<div class="lbl" style="top:124px">Sketch Grid</div>
<div class="cb" style="top:123px"></div>
<svg class="a" style="left:151px;top:124px" width="11" height="11"><path d="M2 5.5L4.3 8.8L9 1.5" fill="none" stroke="#111" stroke-width="1.3"/></svg>
<div class="lbl" style="top:154px">Snap</div>
<div class="cb" style="top:153px"></div>
<svg class="a" style="left:151px;top:154px" width="11" height="11"><path d="M2 5.5L4.3 8.8L9 1.5" fill="none" stroke="#111" stroke-width="1.3"/></svg>
<div class="lbl" style="top:184px">Slice</div>
<div class="cb" style="top:183px"></div>
<div class="lbl" style="top:214px">Profile</div>
<div class="cb" style="top:213px"></div>
<svg class="a" style="left:151px;top:214px" width="11" height="11"><path d="M2 5.5L4.3 8.8L9 1.5" fill="none" stroke="#111" stroke-width="1.3"/></svg>
<div class="lbl" style="top:244px">Points</div>
<div class="cb" style="top:243px"></div>
<svg class="a" style="left:151px;top:244px" width="11" height="11"><path d="M2 5.5L4.3 8.8L9 1.5" fill="none" stroke="#111" stroke-width="1.3"/></svg>
<div class="lbl" style="top:274px">Dimensions</div>
<div class="cb" style="top:273px"></div>
<svg class="a" style="left:151px;top:274px" width="11" height="11"><path d="M2 5.5L4.3 8.8L9 1.5" fill="none" stroke="#111" stroke-width="1.3"/></svg>
<div class="lbl" style="top:304px">Constraints</div>
<div class="cb" style="top:303px"></div>
<svg class="a" style="left:151px;top:304px" width="11" height="11"><path d="M2 5.5L4.3 8.8L9 1.5" fill="none" stroke="#111" stroke-width="1.3"/></svg>
<div class="lbl" style="top:334px">Projected Geometries</div>
<div class="cb" style="top:333px"></div>
<svg class="a" style="left:151px;top:334px" width="11" height="11"><path d="M2 5.5L4.3 8.8L9 1.5" fill="none" stroke="#111" stroke-width="1.3"/></svg>
<div class="lbl" style="top:364px">Construction Geometries</div>
<div class="cb" style="top:363px"></div>
<svg class="a" style="left:151px;top:364px" width="11" height="11"><path d="M2 5.5L4.3 8.8L9 1.5" fill="none" stroke="#111" stroke-width="1.3"/></svg>
<div class="lbl" style="top:394px">3D Sketch</div>
<div class="cb" style="top:393px"></div>
<svg class="a" style="left:148px;top:60px" width="48" height="19"><g stroke="#f0a878" stroke-width="1.3" fill="none"><path d="M0 9.5H3M5 9.5H7.8M10.2 9.5H11.8M14.2 9.5H15M13.4 7V11"/><path d="M10.8 1L12.6 3.6M10.8 17.5L12.6 14.9"/><path d="M29.2 8.4H44.7" stroke-dasharray="3.2 1.8"/></g><g stroke="#7a7a7a" stroke-width="1" fill="none"><path d="M2.9 7.6L11 3.7M13 3L14.9 1.2M4.5 11.3L11 14.6M13 15.4L14.9 17.2"/></g><path d="M30.1 6.6V3.3Q30.1 1 32.4 1H39.5V3H43.8V6.6M43.8 10.2V13.4H39.5V15.7H32.4Q30.1 15.7 30.1 13.4V10.2" fill="none" stroke="#9a9a9a" stroke-width="1.1"/></svg>
<svg class="a" style="left:148px;top:90px" width="17" height="18"><path d="M1.2 6.3L4.8 1.3L5.8 4.2L10.2 2.6L11.6 2.2V6.3Z" fill="#8a9099" stroke="#3a3f48" stroke-width="0.8"/><rect x="0.8" y="6.6" width="14.5" height="9.8" rx="1" fill="#fff" stroke="#3a3f48" stroke-width="1.3"/><rect x="3.6" y="9.4" width="8.9" height="3.9" fill="#aab4c2" stroke="#3a3f48" stroke-width="1"/></svg>
<div class="a" style="left:0;top:416px;width:248px;height:1px;background:#c9c9c9"></div>
<div class="a" style="left:155px;top:425px;width:82px;height:20px;border:1px solid #b4b4b4;background:#ececec;font-size:12px;color:#555;line-height:18px;text-align:center">Finish Sketch</div>
</div>
<div class="a" style="left:870px;top:450px;width:171px;height:233px;background:#fff;border-radius:3px;box-shadow:0 0 2px rgba(0,0,0,.5)">
<div class="mi" style="top:0.5px;left:0;width:171px;color:#aaa;"><span class="l" style="left:27px">OK</span><span class="r" style="color:#bbb">Return</span></div>
<svg class="a" style="left:4px;top:0.5px" width="18" height="18"><path d="M2 8.5L6 12.5L14.5 3" fill="none" stroke="#8cc48c" stroke-width="3.2"/><path d="M2 8.5L6 12.5L14.5 3" fill="none" stroke="#cfe8cf" stroke-width="1.6"/></svg>
<div class="mi" style="top:17.5px;left:0;width:171px;"><span class="l" style="left:27px">Cancel</span><span class="r" style="">Esc</span></div>
<svg class="a" style="left:4px;top:17.5px" width="18" height="18"><path d="M2.5 2.5L14 14M14 2.5L2.5 14" stroke="#d83030" stroke-width="3.4" stroke-linecap="round"/><path d="M2.5 2.5L14 14M14 2.5L2.5 14" stroke="#f07070" stroke-width="1.4" stroke-linecap="round"/></svg>
<div class="mi" style="top:34.5px;left:0;width:171px;"><span class="l" style="left:27px">Create Selection Set</span><span class="r" style=""></span></div>
<svg class="a" style="left:4px;top:34.5px" width="18" height="18"><rect x="1.5" y="5.5" width="9" height="9" fill="none" stroke="#2f7d32" stroke-width="1.2"/><rect x="4" y="8" width="9" height="7.5" fill="#6fb266" stroke="#2f7d32" stroke-width="1"/><circle cx="13" cy="3" r="2.5" fill="#f5a300"/></svg>
<div class="mi" style="top:51.5px;left:0;width:171px;"><span class="l" style="left:27px">Extrude</span><span class="r" style=""></span></div>
<svg class="a" style="left:4px;top:51.5px" width="18" height="18"><path d="M1 6L4 3H11V13L8 16H1Z" fill="#f2a066"/><path d="M1 6H8V16" fill="none" stroke="#d9844a" stroke-width="0.8"/><path d="M1 16.5H9" stroke="#999" stroke-width="1"/><path d="M14.5 14V2M12.8 4L14.5 1.5L16.2 4" fill="none" stroke="#333" stroke-width="1"/></svg>
<div class="msep" style="top:71.5px"></div>
<div class="mi" style="top:73.5px;left:0;width:171px;"><span class="l" style="left:27px">Edit Sketch</span><span class="r" style=""></span></div>
<svg class="a" style="left:4px;top:73.5px" width="18" height="18"><path d="M1.5 3.5V13.5M1.5 3.5H14.5M14.5 3.5V9M1.5 13.5H8" fill="none" stroke="#1a86d9" stroke-width="1.2" stroke-dasharray="2 1.5"/><path d="M8 16.5L9 13.5L14 9L15.8 10.8L10.8 15.3Z" fill="#f0b429"/><path d="M14 9L15.8 10.8" stroke="#e5484d" stroke-width="1.8"/></svg>
<div class="msep" style="top:93.5px"></div>
<div class="mi" style="top:95.5px;left:0;width:171px;"><span class="l" style="left:27px">Sketch Dimension</span><span class="r" style="">D</span></div>
<svg class="a" style="left:4px;top:95.5px" width="18" height="18"><path d="M1.5 1.5V15.5M15.5 1.5V15.5" fill="none" stroke="#444" stroke-width="1"/><path d="M2.5 5.5H14.5" stroke="#1a86d9" stroke-width="1"/><path d="M2 5.5L5 3.8V7.2Z M15 5.5L12 3.8V7.2Z" fill="#1a86d9"/></svg>
<div class="msep" style="top:115.5px"></div>
<div class="mi" style="top:117.5px;left:0;width:171px;"><span class="l" style="left:27px">Horizontal/Vertical</span><span class="r" style=""></span></div>
<svg class="a" style="left:4px;top:117.5px" width="18" height="18"><path d="M9.6 2.2V11.3M3.9 12.8H12.7" stroke="#444" stroke-width="1"/><path d="M6.5 2.2V11.3M4 3L6.5 5M4 5.8L6.5 7.8M4 8.6L6.5 10.6M3.9 14.6H12.7M4.3 17.3L6 15M7.3 17.3L9 15M10.3 17.3L12 15" stroke="#d22" stroke-width="1"/></svg>
<div class="msep" style="top:137.5px"></div>
<div class="mi" style="top:139.5px;left:0;width:171px;"><span class="l" style="left:27px">Copy</span><span class="r" style="">Ctrl+C</span></div>
<div class="mi" style="top:156.5px;left:2px;width:167px;background:#0696d7;color:#fff;"><span class="l" style="left:25px">Paste</span><span class="r" style="color:#bfe3f5;right:3px">Ctrl+V</span></div>
<div class="msep" style="top:176.5px"></div>
<div class="mi" style="top:178.5px;left:0;width:171px;"><span class="l" style="left:27px">Find in Browser</span><span class="r" style=""></span></div>
<div class="mi" style="top:195.5px;left:0;width:171px;"><span class="l" style="left:27px">Find in Window</span><span class="r" style=""></span></div>
<div class="mi" style="top:212.5px;left:0;width:171px;"><span class="l" style="left:27px">Find in Timeline</span><span class="r" style=""></span></div>
</div>
<div class="btn" style="left:901px;top:691px;width:110px;"><svg style="position:absolute;left:11px;top:5px" width="12" height="12"><path d="M1.5 1.5L10.5 10.5M10.5 1.5L1.5 10.5" stroke="#e8242b" stroke-width="2.6"/></svg><span style="position:absolute;left:34px">Repeat Delete</span></div>
<div class="btn" style="left:862px;top:722px;width:69px;"><span style="position:absolute;left:8px">Delete</span><svg style="position:absolute;left:46px;top:5px" width="12" height="12"><path d="M1.5 1.5L10.5 10.5M10.5 1.5L1.5 10.5" stroke="#e8242b" stroke-width="2.6"/></svg></div>
<div class="btn" style="left:980px;top:722px;width:90px;"><svg style="position:absolute;left:8px;top:3px" width="17" height="17"><path d="M4 14.5V3.5L7 1H9V14L4 15.5Z" fill="#fff" stroke="#444" stroke-width="0.9"/><path d="M6 3L8 1H12V13L10 15H6Z" fill="#5aa8e8"/><path d="M11.5 8H16M14 6L16 8L14 10" fill="none" stroke="#222" stroke-width="1"/></svg><span style="position:absolute;left:34px">Press Pull</span></div>
<div class="btn" style="left:842px;top:750px;width:70px;"><span style="position:absolute;left:11px">Undo</span><svg style="position:absolute;left:45px;top:5px" width="14" height="13"><path d="M12.5 12.5C12.5 8 10 5 4 5" fill="none" stroke="#333" stroke-width="1.4"/><path d="M5.5 1L1.5 5L5.5 9" fill="none" stroke="#333" stroke-width="1.4"/></svg></div>
<div class="btn" style="left:1000px;top:750px;width:70px;background:rgba(200,200,200,.6);color:#6c6c6c;box-shadow:none"><svg style="position:absolute;left:10px;top:4px" width="16" height="15"><path d="M2.5 14C2.5 9 5 6 11 6" fill="none" stroke="#858585" stroke-width="2.2"/><path d="M9 1.5L14 6L9 10.5Z" fill="#858585"/></svg><span style="position:absolute;left:35px">Redo</span></div>
<div class="btn" style="left:833px;top:778px;width:98px;"><span style="position:absolute;left:10px">Move/Copy</span><svg style="position:absolute;left:73px;top:4px" width="15" height="15"><path d="M7.5 1V14M1 7.5H14" stroke="#222" stroke-width="1.3"/><path d="M7.5 0L5 3H10Z M7.5 15L5 12H10Z M0 7.5L3 5V10Z M15 7.5L12 5V10Z" fill="#222"/></svg></div>
<div class="btn" style="left:980px;top:778px;width:60px;"><svg style="position:absolute;left:8px;top:3px" width="17" height="17"><path d="M2.5 3.5L4.5 1.5H15.5V13.5L13.5 15.5H2.5Z" fill="#f4f4f4" stroke="#555" stroke-width="0.9"/><circle cx="8.5" cy="9" r="4.2" fill="#d8e6f2" stroke="#555" stroke-width="0.9"/><path d="M8.5 9L12 11A4 4 0 0 1 5 11Z" fill="#4a90d9"/></svg><span style="position:absolute;left:32px">Hole</span></div>
<div class="btn" style="left:922px;top:809px;width:69px;"><span style="position:absolute;left:10px">Sketch</span><svg style="position:absolute;left:52px;top:7px" width="10" height="8"><path d="M0.5 0.5H9.5L5 7.5Z" fill="#222"/></svg></div>
<div class="a" style="left:842px;top:896px;width:257px;height:24px;background:#f2f2f2"></div>
<svg class="a" style="left:842px;top:896px" width="257" height="24">
<g stroke="#222" fill="none" stroke-width="1.1">
<path d="M11.5 20.5V5M9 7.5L11.5 4.5L14 7.5"/><path d="M8 16.8C4.5 16.3 3.5 15.5 3.5 14.5C3.5 13 7 12 11.5 12C16 12 19.5 13 19.5 14.5C19.5 16 16 17 12.5 17"/>
<path d="M5.5 15.5L3.5 17L5.5 18.5"/>
</g>
<path d="M25 11.5H30.5L27.75 14.5Z" fill="#222"/>
<path d="M36.5 9.5H52.5V21.5H36.5Z" fill="#f3f3f3" stroke="#555" stroke-width="1"/><rect x="39.5" y="13.5" width="10" height="5" fill="#a3b4c6" stroke="#555" stroke-width="0.8"/><path d="M37 9L39.5 5.5L42 8.5L45.5 6L49 8.5H52" fill="#555"/>
<path d="M67 21C64 19 63 17 62 15C61.3 13.7 62.3 12.6 63.5 13.6L65 15V7C65 6 66.5 6 66.5 7V12V5.5C66.5 4.5 68.2 4.5 68.2 5.5V12V5C68.2 4 70 4 70 5V12V6C70 5 71.7 5 71.7 6V12.5V8C71.7 7 73.3 7 73.3 8V15C73.3 18.5 72 20 71 21Z" fill="#fff" stroke="#333" stroke-width="0.9"/>
<circle cx="94" cy="12.5" r="4.6" fill="#e3edf2" stroke="#333" stroke-width="1.4"/><path d="M97.2 15.8L100.5 19" stroke="#222" stroke-width="2.3"/><path d="M98.5 6H103.5M101 3.5V8.5M98.5 9.8H103.5" stroke="#333" stroke-width="0.9"/>
<rect x="114" y="4.5" width="16" height="15" fill="none" stroke="#444" stroke-width="0.8" stroke-dasharray="1.5 1.5"/>
<circle cx="121" cy="11" r="5.6" fill="#e3edf2" stroke="#333" stroke-width="1.4"/><path d="M125 15L129 19" stroke="#222" stroke-width="2.3"/>
<path d="M135.5 11.5H140.6L138 14.5Z" fill="#222"/>
<rect x="147.5" y="5" width="15" height="12" rx="1" fill="#9cbde3" stroke="#555" stroke-width="1.3"/><path d="M152.5 18.2H157.5M151 19.6H159" stroke="#555" stroke-width="1"/>
<path d="M165.4 11.5H170.5L168 14.5Z" fill="#222"/>
<rect x="178" y="4.5" width="15.5" height="15" fill="#cfd6df"/><path d="M178 8.3H193.5M178 12H193.5M178 15.7H193.5M181.9 4.5V19.5M185.8 4.5V19.5M189.7 4.5V19.5" stroke="#6f7f92" stroke-width="1"/>
<path d="M196.8 11.5H202L199.4 14.5Z" fill="#222"/>
<rect x="209.5" y="5" width="14" height="14" fill="#a9c5e8" stroke="#2d4e8a" stroke-width="1.3"/><path d="M209.5 12H223.5M216.5 5V19" stroke="#2d4e8a" stroke-width="1.3"/>
<path d="M228 11.5H233.2L230.6 14.5Z" fill="#222"/>
</svg>
<div class="t" style="left:1707px;top:905px;font-size:11.3px;font-weight:700;color:#e6e6e6">1 Sketch Line | Length : 325.269 mm</div>
</body></html>
